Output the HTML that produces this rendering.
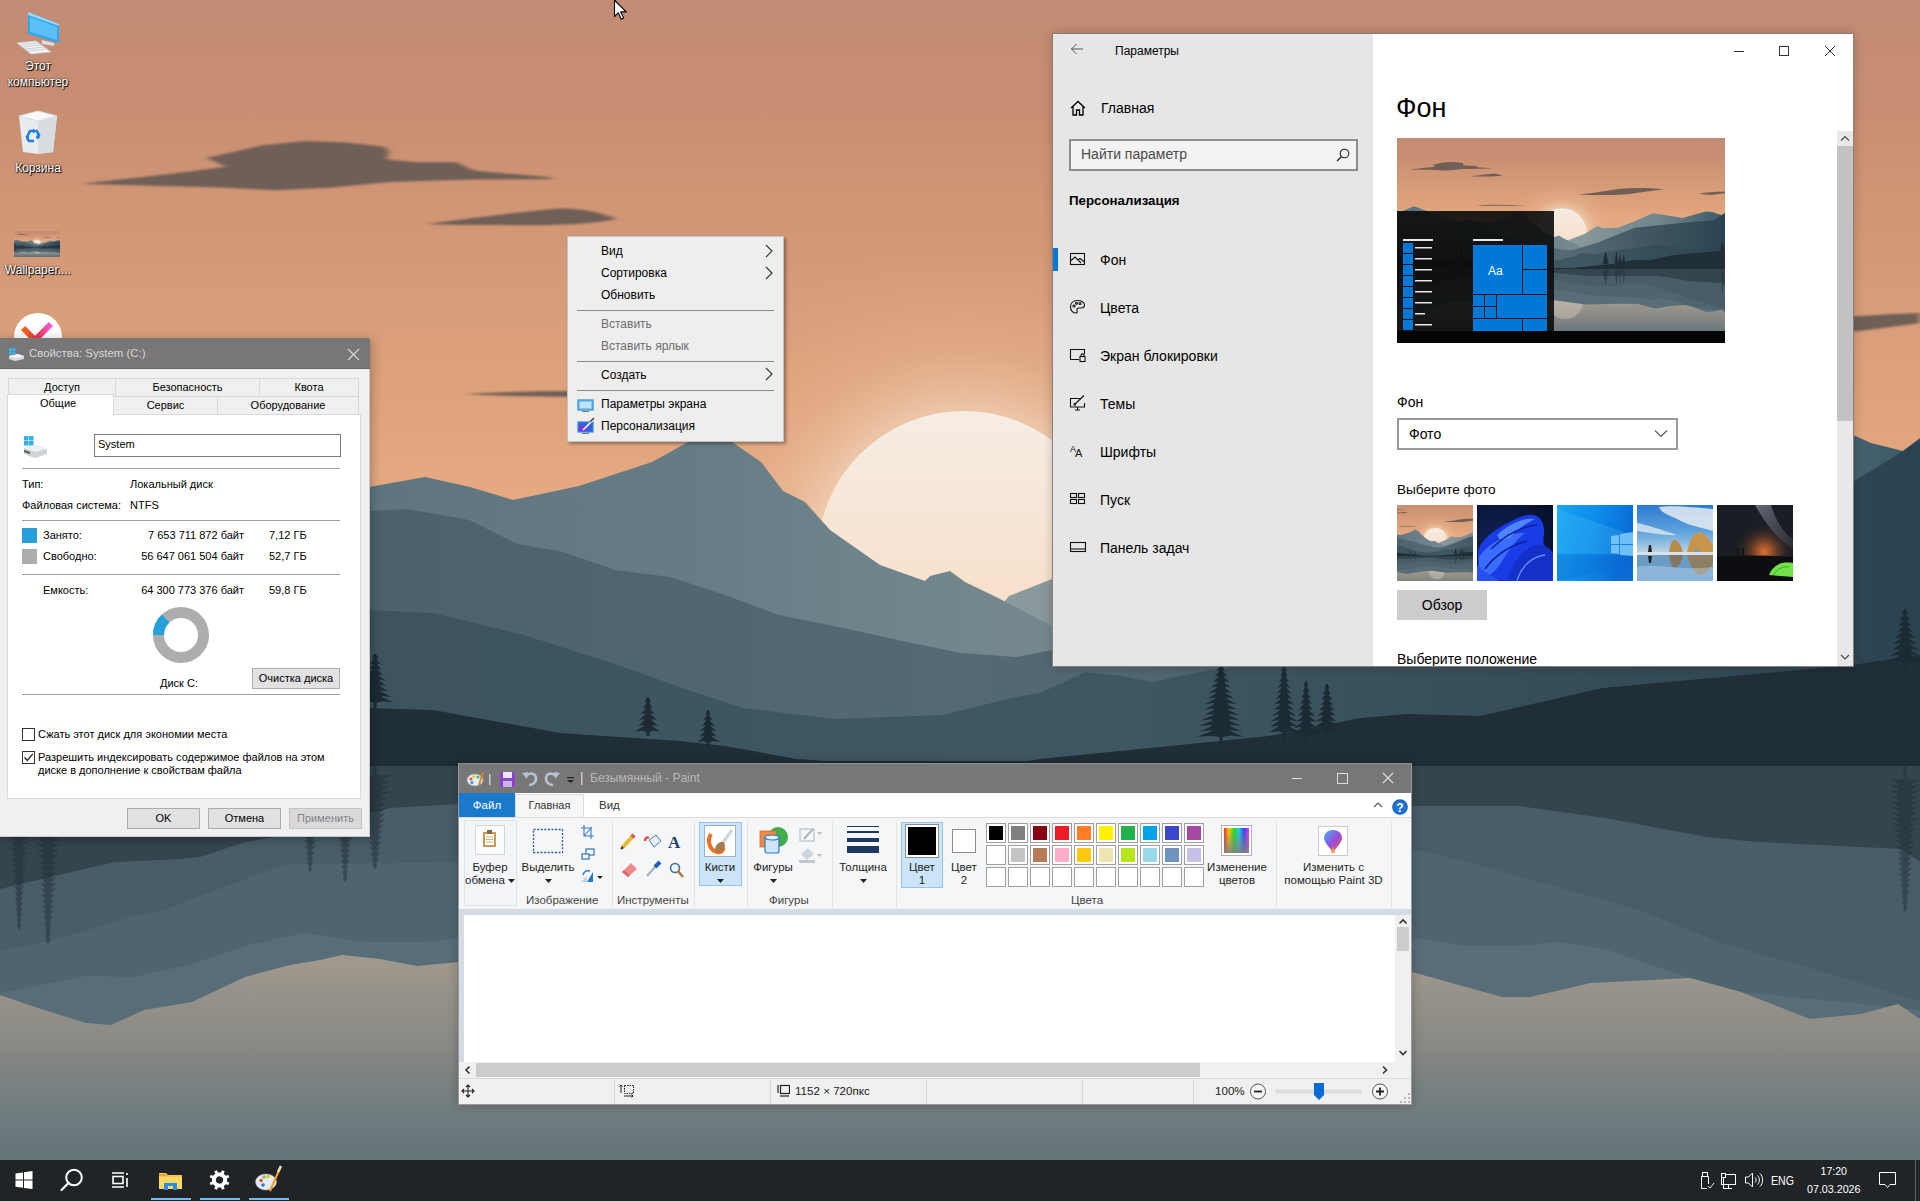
<!DOCTYPE html>
<html><head><meta charset="utf-8"><style>
html,body{margin:0;padding:0;}
body{width:1920px;height:1201px;overflow:hidden;position:relative;font-family:"Liberation Sans",sans-serif;background:#2a3a44;}
.a{position:absolute;}
.t{position:absolute;white-space:nowrap;line-height:1;}
.win{position:absolute;overflow:hidden;}
.sep{position:absolute;height:1px;background:#a0a0a0;}
.btn{position:absolute;background:#e1e1e1;border:1px solid #adadad;box-sizing:border-box;font-size:11px;color:#000;text-align:center;}
.tab{position:absolute;background:#f0f0f0;border:1px solid #d9d9d9;box-sizing:border-box;font-size:11px;text-align:center;color:#000;}
.chk{position:absolute;width:13px;height:13px;border:1px solid #333;box-sizing:border-box;background:#fff;}
.ctx{position:absolute;font-size:12px;color:#000;}
.dim{color:#6d6d6d;}
.nav{position:absolute;font-size:14px;color:#000;}
.pal{position:absolute;width:20px;height:20px;box-sizing:border-box;border:1px solid #a0a0a0;background:#fff;}
.pal i{position:absolute;left:2px;top:2px;width:14px;height:14px;}
.rl{position:absolute;font-size:11.5px;color:#1e1e1e;text-align:center;line-height:13px;}
.gl{position:absolute;font-size:11.5px;color:#444;}
.gsep{position:absolute;width:1px;background:#e2e3e4;top:822px;height:86px;}
.icn{position:absolute;color:#fff;font-size:12px;text-align:center;text-shadow:0 0 2px #000,1px 1px 1px #000;line-height:16px;}

</style></head><body>
<svg class="a" style="left:0;top:0" width="1920" height="1201" viewBox="0 0 1920 1201">
<defs><symbol id="wall" viewBox="0 0 1920 1200" preserveAspectRatio="xMidYMid slice">
<defs>
<linearGradient id="sky" x1="0" y1="0" x2="0" y2="1200" gradientUnits="userSpaceOnUse">
<stop offset="0" stop-color="#c38b74"/>
<stop offset="0.09" stop-color="#c88e73"/>
<stop offset="0.17" stop-color="#d09675"/>
<stop offset="0.26" stop-color="#d89d79"/>
<stop offset="0.34" stop-color="#dfa37c"/>
<stop offset="0.40" stop-color="#e4a981"/>
<stop offset="0.6" stop-color="#e8b089"/>
</linearGradient>
<radialGradient id="glow" cx="964" cy="560" r="320" gradientUnits="userSpaceOnUse">
<stop offset="0.42" stop-color="#f3d9c2" stop-opacity="0.8"/>
<stop offset="0.65" stop-color="#ecc0a0" stop-opacity="0.3"/>
<stop offset="1" stop-color="#e4a981" stop-opacity="0"/>
</radialGradient>
<linearGradient id="sun" x1="0" y1="410" x2="0" y2="705" gradientUnits="userSpaceOnUse">
<stop offset="0" stop-color="#f6ede4"/>
<stop offset="1" stop-color="#f8d9bf"/>
</linearGradient>
<linearGradient id="sand" x1="0" y1="940" x2="0" y2="1200" gradientUnits="userSpaceOnUse">
<stop offset="0" stop-color="#a59c8f"/>
<stop offset="0.42" stop-color="#888884"/>
<stop offset="0.615" stop-color="#747e80"/>
<stop offset="0.846" stop-color="#647479"/>
<stop offset="1" stop-color="#607278"/>
</linearGradient>
<linearGradient id="l0" x1="990" y1="0" x2="1920" y2="0" gradientUnits="userSpaceOnUse">
<stop offset="0" stop-color="#8c9a9c"/>
<stop offset="0.6" stop-color="#6f858c"/>
<stop offset="1" stop-color="#3b5966"/>
</linearGradient>
<linearGradient id="l1" x1="369" y1="0" x2="1000" y2="0" gradientUnits="userSpaceOnUse">
<stop offset="0" stop-color="#5e7580"/>
<stop offset="0.5" stop-color="#667c85"/>
<stop offset="1" stop-color="#74888e"/>
</linearGradient>
<linearGradient id="l2" x1="0" y1="0" x2="1920" y2="0" gradientUnits="userSpaceOnUse">
<stop offset="0.19" stop-color="#4b626c"/>
<stop offset="0.5" stop-color="#536a74"/>
<stop offset="0.6" stop-color="#4f6670"/>
<stop offset="1" stop-color="#2b4250"/>
</linearGradient>
<linearGradient id="l3" x1="0" y1="0" x2="1920" y2="0" gradientUnits="userSpaceOnUse">
<stop offset="0.19" stop-color="#3d5460"/>
<stop offset="0.36" stop-color="#3e5662"/>
<stop offset="0.52" stop-color="#3f5763"/>
<stop offset="0.58" stop-color="#3f5762"/>
<stop offset="1" stop-color="#2e4552"/>
</linearGradient>
<filter id="cb" x="-10%" y="-50%" width="120%" height="200%"><feGaussianBlur stdDeviation="3 1.2"/></filter>
</defs>
<rect x="0" y="0" width="1920" height="770" fill="url(#sky)"/>
<rect x="600" y="200" width="800" height="600" fill="url(#glow)"/>
<path d="M85.6,183.3 L150.3,176.2 L198.1,170.6 L226.2,166.4 L206.5,158 L237.5,150.9 L262.8,145.3 L305,141.1 L347.2,142.5 L383.7,146.7 L389.3,150.9 L386.5,159.4 L417.5,162.2 L456.8,162.2 L473.7,170.6 L552.4,177.6 L552.4,179 L473.7,179.6 L389.3,181.9 L333.1,187.5 L276.9,190.3 L220.6,187.5 L164.4,186.1 L85.6,184.1 Z" fill="#6f5e57" filter="url(#cb)"/>
<path d="M426,224 C460,220 500,214 545,210 C560,207 590,208 617,219 C590,225 540,226 500,225 C470,225 445,225 426,224 Z" fill="#6f5e57" filter="url(#cb)"/>
<path d="M465,394 C500,392 540,391 580,391 C640,391 700,392 757,394 C700,396 640,397 590,397 C540,397 500,396 465,394 Z" fill="#6f5e57" filter="url(#cb)"/>
<path d="M1064,330 C1150,324 1250,304 1330,296 C1400,290 1480,292 1563,300 C1500,308 1420,318 1360,328 C1280,336 1170,336 1064,330 Z" fill="#6f5e57" filter="url(#cb)"/>
<path d="M1772,323 C1810,318 1853,316 1920,313 L1920,323 C1880,328 1853,334 1820,332 C1800,330 1785,327 1772,323 Z" fill="#6f5e57" filter="url(#cb)"/>
<circle cx="964" cy="558" r="147" fill="url(#sun)"/>
<polygon points="990,770 990,620 1009,596 1100,560 1171,515 1207,529 1292,525 1391,487 1497,441 1567,451 1673,469 1744,448 1808,430 1853,435 1871,443 1903,451 1920,438 1920,770" fill="url(#l0)" />
<polygon points="0,770 0,445 50,420 100,400 150,418 250,455 369,487 425,477 470,487 513,500 579,486 652,462 690,441 712,428 735,444 761,462 783,491 805,502 830,530 880,565 925,581 930,576 950,571 965,582 992,595 1002,600 1040,620 1100,650 1100,770" fill="url(#l1)" />
<polygon points="0,770 0,505 100,500 250,505 369,511 407,509 469,520 517,544 560,551 615,570 670,577 725,595 779,615 834,626 907,642 961,653 1016,657 1053,650 1179,610 1391,525 1603,504 1744,490 1853,482 1900,453 1920,439 1920,770" fill="url(#l2)" />
<polygon points="0,770 0,600 200,605 369,610 433,613 524,635 615,664 688,690 743,708 834,719 943,715 1016,697 1040,693 1086,672 1120,676 1152,682 1200,672 1320,653 1532,625 1744,650 1920,690 1920,770" fill="url(#l3)" />
<polygon points="0,770 0,700 200,705 369,708 433,710 560,733 680,741 725,746 797,759 852,763 1016,763 1040,759 1200,743 1269,736 1361,718 1407,714 1480,716 1603,688 1853,665 1920,655 1920,770" fill="#1f2e37" />
<polygon points="375,654 375.9,654.0 379.1,659.1 376.8,658.0 376.7,659.4 380.7,664.5 377.6,663.4 377.4,664.8 381.4,669.9 377.9,668.9 378.2,670.2 383.5,675.3 378.8,674.2 378.9,675.6 385.5,680.7 379.7,679.6 379.7,681.0 386.1,686.1 380.0,685.0 380.4,686.4 388.4,691.5 381.0,690.4 381.2,691.8 391.2,696.9 382.3,695.9 381.9,697.2 393.4,702.3 383.3,701.2 376.5,702.6 376.5,708 373.5,708 373.5,702.6 368.1,701.2 359.7,702.3 368.1,697.2 367.4,695.9 358.2,696.9 368.8,691.8 368.4,690.4 360.4,691.5 369.6,686.4 369.9,685.0 363.6,686.1 370.3,681.0 370.6,679.6 365.1,680.7 371.1,675.6 370.7,674.2 365.5,675.3 371.8,670.2 371.9,668.9 368.1,669.9 372.6,664.8 372.4,663.4 369.2,664.5 373.3,659.4 373.2,658.0 371.1,659.1 374.1,654.0" fill="#1b2a33"/>
<polygon points="648,697 648.6,697.0 651.2,702.6 649.4,701.4 649.4,702.9 652.6,708.4 650.1,707.2 650.2,708.7 655.1,714.3 651.2,713.1 651.0,714.5 657.1,720.1 652.1,718.9 651.8,720.4 658.4,726.0 652.7,724.8 652.6,726.2 659.8,731.8 653.3,730.6 649.5,732.1 649.5,736 646.5,736 646.5,732.1 642.1,730.6 634.9,731.8 643.4,726.2 643.6,724.8 638.2,726.0 644.2,720.4 644.1,718.9 639.3,720.1 645.0,714.5 644.7,713.1 640.7,714.3 645.8,708.7 645.7,707.2 642.8,708.4 646.6,702.9 646.5,701.4 644.6,702.6 647.4,697.0" fill="#1b2a33"/>
<polygon points="708,710 708.6,710.0 711.2,715.1 709.4,714.0 709.3,715.4 712.8,720.5 710.2,719.4 710.0,720.8 714.8,725.9 711.0,724.9 710.8,726.2 716.2,731.3 711.7,730.2 711.5,731.6 716.7,736.7 711.9,735.6 712.2,737.0 720.0,742.1 713.4,741.0 709.5,742.4 709.5,746 706.5,746 706.5,742.4 703.3,741.0 697.6,742.1 703.8,737.0 704.1,735.6 699.4,736.7 704.5,731.6 704.4,730.2 700.0,731.3 705.2,726.2 705.4,724.9 702.2,725.9 706.0,720.8 705.9,719.4 703.4,720.5 706.7,715.4 706.7,714.0 705.2,715.1 707.4,710.0" fill="#1b2a33"/>
<polygon points="1221,666 1222.3,666.0 1225.1,671.2 1222.8,670.1 1223.0,671.5 1227.4,676.7 1223.9,675.6 1223.8,676.9 1229.4,682.1 1224.8,681.0 1224.5,682.4 1230.7,687.6 1225.4,686.5 1225.2,687.9 1231.3,693.1 1225.6,692.0 1226.0,693.3 1234.0,698.5 1226.9,697.4 1226.7,698.8 1236.3,704.0 1227.9,702.9 1227.4,704.3 1237.3,709.5 1228.3,708.4 1228.1,709.8 1238.8,714.9 1229.0,713.9 1228.9,715.2 1240.1,720.4 1229.6,719.3 1229.6,720.7 1241.5,725.9 1230.2,724.8 1230.3,726.2 1241.8,731.4 1230.3,730.3 1231.1,731.6 1243.5,736.8 1231.1,735.7 1222.5,737.1 1222.5,745 1219.5,745 1219.5,737.1 1210.3,735.7 1197.1,736.8 1210.9,731.6 1211.5,730.3 1199.9,731.4 1211.7,726.2 1211.1,724.8 1199.1,725.9 1212.4,720.7 1211.9,719.3 1200.8,720.4 1213.1,715.2 1213.6,713.9 1204.5,714.9 1213.9,709.8 1213.5,708.4 1204.4,709.5 1214.6,704.3 1214.0,702.9 1205.4,704.0 1215.3,698.8 1215.4,697.4 1208.5,698.5 1216.0,693.3 1215.6,692.0 1208.9,693.1 1216.8,687.9 1216.4,686.5 1210.8,687.6 1217.5,682.4 1217.4,681.0 1213.1,682.1 1218.2,676.9 1218.1,675.6 1214.5,676.7 1219.0,671.5 1219.0,670.1 1216.6,671.2 1219.7,666.0" fill="#1b2a33"/>
<polygon points="1284,666 1284.8,666.0 1287.0,671.3 1285.4,670.2 1285.3,671.5 1287.9,676.8 1285.8,675.7 1285.8,677.1 1289.0,682.4 1286.3,681.3 1286.3,682.6 1290.0,687.9 1286.7,686.8 1286.8,688.2 1291.1,693.5 1287.2,692.4 1287.3,693.8 1292.0,699.0 1287.6,697.9 1287.8,699.3 1294.0,704.6 1288.5,703.5 1288.3,704.9 1293.8,710.1 1288.4,709.0 1288.8,710.4 1296.4,715.7 1289.6,714.6 1289.3,716.0 1297.0,721.2 1289.8,720.1 1289.8,721.5 1298.5,726.8 1290.5,725.7 1290.3,727.0 1299.7,732.3 1291.1,731.2 1285.5,732.6 1285.5,740 1282.5,740 1282.5,732.6 1277.4,731.2 1269.4,732.3 1277.7,727.0 1277.7,725.7 1269.9,726.8 1278.2,721.5 1278.1,720.1 1270.9,721.2 1278.7,716.0 1278.7,714.6 1272.3,715.7 1279.2,710.4 1279.2,709.0 1273.4,710.1 1279.7,704.9 1279.4,703.5 1273.8,704.6 1280.2,699.3 1280.1,697.9 1275.3,699.0 1280.7,693.8 1280.8,692.4 1277.0,693.5 1281.2,688.2 1281.0,686.8 1277.2,687.9 1281.7,682.6 1281.7,681.3 1278.9,682.4 1282.2,677.1 1282.2,675.7 1280.1,676.8 1282.7,671.5 1282.6,670.2 1280.9,671.3 1283.2,666.0" fill="#1b2a33"/>
<polygon points="1306,681 1306.6,681.0 1308.7,686.6 1307.2,685.4 1307.2,686.9 1309.9,692.5 1307.7,691.3 1307.7,692.8 1310.8,698.4 1308.1,697.2 1308.2,698.7 1312.0,704.3 1308.7,703.1 1308.8,704.6 1312.8,710.2 1309.1,709.0 1309.3,710.5 1315.3,716.1 1310.2,714.9 1309.8,716.4 1316.5,722.0 1310.7,720.8 1310.3,722.3 1316.5,727.9 1310.7,726.7 1310.9,728.2 1318.5,733.8 1311.6,732.6 1307.5,734.1 1307.5,740 1304.5,740 1304.5,734.1 1300.8,732.6 1294.5,733.8 1301.1,728.2 1300.7,726.7 1294.2,727.9 1301.7,722.3 1301.5,720.8 1296.0,722.0 1302.2,716.4 1302.4,714.9 1297.9,716.1 1302.7,710.5 1302.5,709.0 1298.3,710.2 1303.2,704.6 1303.3,703.1 1299.9,704.3 1303.8,698.7 1303.9,697.2 1301.3,698.4 1304.3,692.8 1304.4,691.3 1302.5,692.5 1304.8,686.9 1304.9,685.4 1303.6,686.6 1305.4,681.0" fill="#1b2a33"/>
<polygon points="1327,684 1327.7,684.0 1329.8,689.1 1328.2,688.0 1328.3,689.4 1330.9,694.5 1328.8,693.4 1328.8,694.8 1332.8,699.9 1329.6,698.9 1329.4,700.2 1333.4,705.3 1329.9,704.2 1330.0,705.6 1334.9,710.7 1330.6,709.6 1330.6,711.0 1335.9,716.1 1331.0,715.0 1331.1,716.4 1336.5,721.5 1331.3,720.4 1331.7,721.8 1339.1,726.9 1332.4,725.9 1332.3,727.2 1340.9,732.3 1333.3,731.2 1328.5,732.6 1328.5,738 1325.5,738 1325.5,732.6 1321.7,731.2 1315.2,732.3 1321.7,727.2 1321.5,725.9 1314.8,726.9 1322.3,721.8 1321.8,720.4 1315.5,721.5 1322.9,716.4 1322.5,715.0 1317.0,716.1 1323.4,711.0 1323.3,709.6 1318.8,710.7 1324.0,705.6 1324.2,704.2 1320.9,705.3 1324.6,700.2 1324.5,698.9 1321.3,699.9 1325.2,694.8 1325.0,693.4 1322.5,694.5 1325.7,689.4 1325.8,688.0 1324.3,689.1 1326.3,684.0" fill="#1b2a33"/>
<polygon points="1905,609 1905.9,609.0 1908.5,614.6 1906.6,613.4 1906.6,614.9 1909.8,620.5 1907.2,619.3 1907.3,620.8 1911.2,626.4 1907.8,625.2 1908.0,626.7 1912.7,632.3 1908.5,631.1 1908.7,632.6 1915.3,638.2 1909.6,637.0 1909.4,638.5 1916.3,644.1 1910.1,642.9 1910.1,644.4 1919.0,650.0 1911.3,648.8 1910.8,650.3 1919.6,655.9 1911.6,654.7 1911.5,656.2 1921.1,661.8 1912.3,660.6 1906.5,662.1 1906.5,668 1903.5,668 1903.5,662.1 1897.4,660.6 1888.1,661.8 1898.5,656.2 1898.2,654.7 1889.9,655.9 1899.2,650.3 1899.4,648.8 1892.6,650.0 1899.9,644.4 1899.7,642.9 1893.3,644.1 1900.6,638.5 1900.5,637.0 1895.0,638.2 1901.3,632.6 1901.5,631.1 1897.3,632.3 1902.0,626.7 1901.9,625.2 1898.1,626.4 1902.7,620.8 1902.6,619.3 1899.6,620.5 1903.4,614.9 1903.4,613.4 1901.5,614.6 1904.1,609.0" fill="#1b2a33"/>
<polygon points="19,590 19.8,590.0 21.3,595.2 20.1,594.1 20.0,595.4 21.8,600.6 20.3,599.5 20.3,600.9 22.4,606.1 20.5,605.0 20.6,606.3 23.1,611.5 20.8,610.4 20.9,611.8 24.2,617.0 21.3,615.9 21.2,617.2 24.7,622.4 21.5,621.3 21.5,622.7 25.2,627.9 21.8,626.8 21.8,628.1 26.1,633.3 22.2,632.2 22.1,633.6 27.1,638.8 22.7,637.7 22.4,639.0 27.8,644.2 23.0,643.1 22.7,644.5 27.7,649.6 22.9,648.6 23.0,649.9 27.6,655.1 22.9,654.0 23.3,655.4 29.0,660.5 23.5,659.5 23.5,660.8 29.1,666.0 23.6,664.9 23.8,666.3 30.1,671.4 24.0,670.3 24.1,671.7 31.3,676.9 24.5,675.8 24.4,677.2 31.1,682.3 24.4,681.2 24.7,682.6 32.9,687.8 25.3,686.7 25.0,688.1 34.2,693.2 25.8,692.1 20.5,693.5 20.5,705 17.5,705 17.5,693.5 12.1,692.1 3.7,693.2 13.0,688.1 12.6,686.7 4.7,687.8 13.3,682.6 13.1,681.2 5.8,682.3 13.6,677.2 13.3,675.8 6.4,676.9 13.9,671.7 13.8,670.3 7.4,671.4 14.2,666.3 14.0,664.9 7.9,666.0 14.5,660.8 14.9,659.5 9.8,660.5 14.7,655.4 15.0,654.0 10.1,655.1 15.0,649.9 14.9,648.6 9.8,649.6 15.3,644.5 15.0,643.1 10.1,644.2 15.6,639.0 15.7,637.7 11.6,638.8 15.9,633.6 16.0,632.2 12.3,633.3 16.2,628.1 16.1,626.8 12.5,627.9 16.5,622.7 16.4,621.3 13.2,622.4 16.8,617.2 16.6,615.9 13.6,617.0 17.1,611.8 17.2,610.4 15.0,611.5 17.4,606.3 17.4,605.0 15.4,606.1 17.7,600.9 17.7,599.5 16.2,600.6 18.0,595.4 17.9,594.1 16.4,595.2 18.2,590.0" fill="#1b2a33"/>
<polygon points="48,575 48.9,575.0 50.7,580.3 49.2,579.2 49.2,580.6 51.8,585.9 49.7,584.8 49.6,586.1 52.5,591.4 50.0,590.3 49.9,591.7 52.5,597.0 50.0,595.9 50.2,597.3 53.2,602.6 50.4,601.5 50.5,602.9 54.3,608.1 50.9,607.0 50.8,608.4 54.7,613.7 51.0,612.6 51.2,614.0 56.2,619.3 51.7,618.2 51.5,619.6 56.8,624.9 51.9,623.8 51.8,625.1 57.9,630.4 52.5,629.3 52.1,630.7 58.0,636.0 52.5,634.9 52.4,636.3 59.5,641.6 53.2,640.5 52.8,641.9 58.7,647.1 52.8,646.0 53.1,647.4 59.1,652.7 53.0,651.6 53.4,653.0 61.4,658.3 54.0,657.2 53.7,658.6 60.9,663.9 53.8,662.8 54.0,664.1 61.1,669.4 53.9,668.3 54.4,669.7 62.2,675.0 54.4,673.9 54.7,675.3 62.8,680.6 54.7,679.5 55.0,680.9 65.2,686.1 55.7,685.0 55.3,686.4 63.5,691.7 55.0,690.6 49.5,692.0 49.5,705 46.5,705 46.5,692.0 40.1,690.6 30.5,691.7 40.7,686.4 40.0,685.0 30.2,686.1 41.0,680.9 40.7,679.5 31.8,680.6 41.3,675.3 41.3,673.9 33.0,675.0 41.6,669.7 41.9,668.3 34.5,669.4 42.0,664.1 42.3,662.8 35.3,663.9 42.3,658.6 42.4,657.2 35.7,658.3 42.6,653.0 43.0,651.6 36.8,652.7 42.9,647.4 42.6,646.0 35.9,647.1 43.2,641.9 43.5,640.5 37.9,641.6 43.6,636.3 43.5,634.9 38.0,636.0 43.9,630.7 43.9,629.3 38.9,630.4 44.2,625.1 44.3,623.8 39.8,624.9 44.5,619.6 44.3,618.2 39.8,619.3 44.8,614.0 45.1,612.6 41.5,613.7 45.2,608.4 45.2,607.0 41.7,608.1 45.5,602.9 45.6,601.5 42.6,602.6 45.8,597.3 46.0,595.9 43.5,597.0 46.1,591.7 46.1,590.3 43.9,591.4 46.4,586.1 46.4,584.8 44.4,585.9 46.8,580.6 46.8,579.2 45.3,580.3 47.1,575.0" fill="#1b2a33"/>
<polygon points="310,650 310.8,650.0 313.0,655.1 311.3,654.0 311.3,655.4 314.1,660.5 311.8,659.4 311.9,660.8 314.8,665.9 312.2,664.9 312.4,666.2 316.3,671.3 312.8,670.2 313.0,671.6 317.8,676.7 313.5,675.6 313.5,677.0 318.3,682.1 313.8,681.0 314.1,682.4 320.6,687.5 314.8,686.4 314.6,687.8 322.5,692.9 315.6,691.9 315.2,693.2 322.7,698.3 315.7,697.2 315.7,698.6 322.7,703.7 315.7,702.6 311.5,704.0 311.5,710 308.5,710 308.5,704.0 303.2,702.6 294.9,703.7 304.3,698.6 304.2,697.2 297.2,698.3 304.8,693.2 305.0,691.9 298.9,692.9 305.4,687.8 305.7,686.4 300.5,687.5 305.9,682.4 305.5,681.0 300.1,682.1 306.5,677.0 306.5,675.6 302.2,676.7 307.0,671.6 307.1,670.2 303.5,671.3 307.6,666.2 307.4,664.9 304.1,665.9 308.1,660.8 308.3,659.4 306.2,660.5 308.7,655.4 308.7,654.0 307.0,655.1 309.2,650.0" fill="#1b2a33"/>
<polygon points="345,640 345.8,640.0 347.8,645.4 346.3,644.3 346.3,645.7 349.1,651.2 346.9,650.0 346.8,651.5 349.7,656.9 347.1,655.8 347.3,657.2 350.6,662.6 347.5,661.5 347.8,662.9 352.0,668.4 348.1,667.2 348.3,668.6 352.6,674.1 348.4,672.9 348.8,674.4 354.4,679.8 349.2,678.7 349.3,680.1 356.4,685.5 350.1,684.4 349.8,685.8 357.6,691.3 350.7,690.1 350.3,691.5 357.3,697.0 350.5,695.8 350.8,697.3 360.0,702.7 351.7,701.6 346.5,703.0 346.5,710 343.5,710 343.5,703.0 339.2,701.6 332.1,702.7 339.2,697.3 339.8,695.8 333.4,697.0 339.7,691.5 339.5,690.1 332.8,691.3 340.2,685.8 340.6,684.4 335.2,685.5 340.7,680.1 340.5,678.7 335.0,679.8 341.2,674.4 341.3,672.9 336.7,674.1 341.7,668.6 341.5,667.2 337.2,668.4 342.2,662.9 342.4,661.5 339.2,662.6 342.7,657.2 342.6,655.8 339.6,656.9 343.2,651.5 343.4,650.0 341.4,651.2 343.7,645.7 343.8,644.3 342.3,645.4 344.2,640.0" fill="#1b2a33"/>
<rect x="0" y="763" width="1920" height="440" fill="#34454d"/>
<rect x="0" y="761" width="1920" height="5" fill="#1f2d35"/>
<polygon points="0,1201 0,889 63,874 115,862 182,859 200,857 245,842 275,837 300,830 390,808 459,804 600,800 800,790 920,787 1108,808 1412,806 1519,806 1605,818 1707,837 1758,842 1902,849 1920,862 1920,1201" fill="#485d67" />
<polygon points="0,1201 0,951 57,939 134,916 163,910 200,896 245,879 290,864 350,864 459,862 700,850 920,830 1072,858 1249,872 1412,849 1468,862 1553,886 1639,910 1724,944 1810,968 1912,999 1920,1000 1920,1201" fill="#4f656e" />
<polygon points="0,1201 0,993 86,976 134,977 192,964 252,944 305,933 365,942 425,942 459,938 700,920 920,886 1108,914 1214,928 1391,930 1412,937 1468,946 1519,946 1557,942 1605,949 1690,978 1741,992 1920,1010 1920,1201" fill="#586d77" />
<g transform="translate(0,1528) scale(1,-1)" opacity="0.5"><polygon points="375,659.5 375.9,659.5 377.6,664.8 376.2,663.6 376.3,665.0 379.0,670.3 376.8,669.2 376.7,670.6 380.1,675.8 377.3,674.7 377.1,676.1 380.2,681.4 377.3,680.2 377.5,681.6 382.1,686.9 378.2,685.8 377.9,687.2 382.2,692.4 378.2,691.3 378.3,692.7 382.8,697.9 378.5,696.8 378.7,698.2 383.9,703.5 379.0,702.4 379.1,703.8 385.1,709.0 379.6,707.9 379.5,709.3 385.0,714.5 379.5,713.4 379.9,714.8 386.5,720.1 380.2,719.0 380.3,720.4 386.9,725.6 380.4,724.5 380.7,725.9 387.9,731.1 380.8,730.0 381.1,731.4 390.6,736.7 382.0,735.6 381.5,737.0 389.1,742.2 381.3,741.1 381.9,742.5 391.1,747.7 382.2,746.6 382.3,748.0 391.4,753.3 382.4,752.2 376.5,753.5 376.5,764 373.5,764 373.5,753.5 367.9,752.2 359.3,753.3 367.7,748.0 368.3,746.6 360.0,747.7 368.1,742.5 367.7,741.1 358.7,742.2 368.5,737.0 369.1,735.6 361.8,736.7 368.9,731.4 369.2,730.0 362.1,731.1 369.3,725.9 369.4,724.5 362.6,725.6 369.7,720.4 369.5,719.0 362.8,720.1 370.1,714.8 370.6,713.4 365.2,714.5 370.5,709.3 370.8,707.9 365.6,709.0 370.9,703.8 371.2,702.4 366.6,703.5 371.3,698.2 371.6,696.8 367.5,697.9 371.7,692.7 371.7,691.3 367.7,692.4 372.1,687.2 372.2,685.8 368.8,686.9 372.5,681.6 372.5,680.2 369.5,681.4 372.9,676.1 372.9,674.7 370.2,675.8 373.3,670.6 373.3,669.2 371.2,670.3 373.7,665.0 373.6,663.6 372.0,664.8 374.1,659.5" fill="#1f2e37"/></g>
<g transform="translate(0,1528) scale(1,-1)" opacity="0.5"><polygon points="648,700.4 648.6,700.4 650.5,705.8 649.1,704.6 649.1,706.1 651.9,711.5 649.7,710.4 649.6,711.8 653.0,717.2 650.2,716.1 650.1,717.5 653.6,723.0 650.5,721.8 650.5,723.3 654.1,728.7 650.8,727.6 651.0,729.0 655.4,734.4 651.3,733.3 651.5,734.7 656.8,740.2 652.0,739.0 652.0,740.4 658.4,745.9 652.7,744.7 652.4,746.2 659.5,751.6 653.2,750.5 652.9,751.9 659.9,757.3 653.4,756.2 649.5,757.6 649.5,764 646.5,764 646.5,757.6 642.2,756.2 635.1,757.3 643.1,751.9 643.5,750.5 638.0,751.6 643.6,746.2 643.5,744.7 638.1,745.9 644.0,740.4 643.7,739.0 638.4,740.2 644.5,734.7 644.4,733.3 639.9,734.4 645.0,729.0 644.9,727.6 641.1,728.7 645.5,723.3 645.6,721.8 642.7,723.0 645.9,717.5 645.8,716.1 643.0,717.2 646.4,711.8 646.3,710.4 644.2,711.5 646.9,706.1 646.8,704.6 645.4,705.8 647.4,700.4" fill="#1f2e37"/></g>
<g transform="translate(0,1528) scale(1,-1)" opacity="0.5"><polygon points="708,712.7 708.6,712.7 710.5,718.2 709.1,717.0 709.1,718.5 711.4,724.0 709.5,722.8 709.7,724.2 713.3,729.7 710.4,728.6 710.2,730.0 714.4,735.5 710.9,734.3 710.8,735.8 715.5,741.3 711.4,740.1 711.3,741.6 717.2,747.0 712.1,745.9 711.9,747.3 718.2,752.8 712.6,751.7 712.4,753.1 718.2,758.6 712.6,757.4 709.5,758.9 709.5,764 706.5,764 706.5,758.9 703.1,757.4 697.1,758.6 703.6,753.1 703.5,751.7 698.1,752.8 704.1,747.3 704.0,745.9 699.2,747.0 704.7,741.6 704.6,740.1 700.5,741.3 705.2,735.8 705.3,734.3 702.1,735.5 705.8,730.0 705.9,728.6 703.4,729.7 706.3,724.2 706.5,722.8 704.6,724.0 706.9,718.5 706.8,717.0 705.4,718.2 707.4,712.7" fill="#1f2e37"/></g>
<g transform="translate(0,1528) scale(1,-1)" opacity="0.5"><polygon points="1221,670.9 1222.3,670.9 1225.0,676.2 1222.8,675.1 1222.9,676.5 1226.4,681.8 1223.4,680.7 1223.6,682.1 1227.5,687.4 1223.9,686.3 1224.2,687.7 1229.1,693.0 1224.6,691.8 1224.8,693.2 1231.2,698.6 1225.6,697.4 1225.5,698.8 1233.3,704.1 1226.6,703.0 1226.1,704.4 1234.8,709.7 1227.2,708.6 1226.7,710.0 1235.9,715.3 1227.7,714.2 1227.4,715.6 1237.1,720.9 1228.3,719.8 1228.0,721.2 1236.3,726.5 1227.9,725.4 1228.6,726.8 1238.4,732.1 1228.8,730.9 1229.3,732.3 1242.3,737.7 1230.6,736.5 1229.9,737.9 1243.9,743.2 1231.3,742.1 1230.5,743.5 1245.8,748.8 1232.2,747.7 1231.2,749.1 1246.8,754.4 1232.6,753.3 1222.5,754.7 1222.5,764 1219.5,764 1219.5,754.7 1209.8,753.3 1196.2,754.4 1210.8,749.1 1211.0,747.7 1198.8,748.8 1211.5,743.5 1211.3,742.1 1199.4,743.2 1212.1,737.9 1212.6,736.5 1202.2,737.7 1212.7,732.3 1213.5,730.9 1204.4,732.1 1213.4,726.8 1213.9,725.4 1205.1,726.5 1214.0,721.2 1214.1,719.8 1205.7,720.9 1214.6,715.6 1214.3,714.2 1206.0,715.3 1215.3,710.0 1214.8,708.6 1207.3,709.7 1215.9,704.4 1215.8,703.0 1209.5,704.1 1216.5,698.8 1216.5,697.4 1211.0,698.6 1217.2,693.2 1217.5,691.8 1213.3,693.0 1217.8,687.7 1217.9,686.3 1214.0,687.4 1218.4,682.1 1218.6,680.7 1215.7,681.8 1219.1,676.5 1219.0,675.1 1216.6,676.2 1219.7,670.9" fill="#1f2e37"/></g>
<g transform="translate(0,1528) scale(1,-1)" opacity="0.5"><polygon points="1284,670.9 1284.8,670.9 1286.8,676.2 1285.3,675.1 1285.2,676.5 1287.3,681.8 1285.5,680.7 1285.6,682.1 1288.3,687.4 1285.9,686.3 1286.0,687.7 1289.7,693.0 1286.6,691.8 1286.4,693.2 1290.6,698.6 1287.0,697.4 1286.8,698.8 1291.7,704.1 1287.5,703.0 1287.2,704.4 1291.6,709.7 1287.4,708.6 1287.6,710.0 1292.2,715.3 1287.7,714.2 1288.0,715.6 1293.3,720.9 1288.2,719.8 1288.4,721.2 1293.6,726.5 1288.3,725.4 1288.8,726.8 1295.6,732.1 1289.2,730.9 1289.2,732.3 1297.2,737.7 1289.9,736.5 1289.6,737.9 1297.7,743.2 1290.2,742.1 1290.0,743.5 1297.2,748.8 1290.0,747.7 1290.4,749.1 1297.8,754.4 1290.2,753.3 1285.5,754.7 1285.5,764 1282.5,764 1282.5,754.7 1277.1,753.3 1268.6,754.4 1277.6,749.1 1277.6,747.7 1269.8,748.8 1278.0,743.5 1277.9,742.1 1270.5,743.2 1278.4,737.9 1278.1,736.5 1270.8,737.7 1278.8,732.3 1278.5,730.9 1271.8,732.1 1279.2,726.8 1279.1,725.4 1273.1,726.5 1279.6,721.2 1279.2,719.8 1273.4,720.9 1280.0,715.6 1280.3,714.2 1275.7,715.3 1280.4,710.0 1280.1,708.6 1275.4,709.7 1280.8,704.4 1281.0,703.0 1277.4,704.1 1281.2,698.8 1281.4,697.4 1278.2,698.6 1281.6,693.2 1281.7,691.8 1278.9,693.0 1282.0,687.7 1282.0,686.3 1279.5,687.4 1282.4,682.1 1282.4,680.7 1280.4,681.8 1282.8,676.5 1282.7,675.1 1281.1,676.2 1283.2,670.9" fill="#1f2e37"/></g>
<g transform="translate(0,1528) scale(1,-1)" opacity="0.5"><polygon points="1306,685.1 1306.6,685.1 1308.3,690.3 1307.0,689.2 1307.0,690.6 1308.9,695.8 1307.3,694.7 1307.4,696.1 1310.1,701.3 1307.8,700.2 1307.7,701.5 1310.6,706.7 1308.1,705.6 1308.1,707.0 1311.6,712.2 1308.5,711.1 1308.5,712.4 1312.3,717.6 1308.9,716.5 1308.8,717.9 1313.1,723.1 1309.2,722.0 1309.2,723.4 1314.0,728.5 1309.6,727.5 1309.6,728.8 1314.6,734.0 1309.9,732.9 1309.9,734.3 1314.7,739.5 1309.9,738.4 1310.3,739.7 1315.9,744.9 1310.5,743.8 1310.7,745.2 1316.9,750.4 1310.9,749.3 1311.0,750.7 1318.8,755.8 1311.8,754.8 1307.5,756.1 1307.5,764 1304.5,764 1304.5,756.1 1300.7,754.8 1294.2,755.8 1301.0,750.7 1301.2,749.3 1295.3,750.4 1301.3,745.2 1300.9,743.8 1294.6,744.9 1301.7,739.7 1301.8,738.4 1296.7,739.5 1302.1,734.3 1302.0,732.9 1297.0,734.0 1302.4,728.8 1302.8,727.5 1298.8,728.5 1302.8,723.4 1303.0,722.0 1299.4,723.1 1303.2,717.9 1303.3,716.5 1300.0,717.6 1303.5,712.4 1303.3,711.1 1300.1,712.2 1303.9,707.0 1304.0,705.6 1301.6,706.7 1304.3,701.5 1304.3,700.2 1302.1,701.3 1304.6,696.1 1304.5,694.7 1302.8,695.8 1305.0,690.6 1305.0,689.2 1303.8,690.3 1305.4,685.1" fill="#1f2e37"/></g>
<g transform="translate(0,1528) scale(1,-1)" opacity="0.5"><polygon points="1327,688.0 1327.7,688.0 1329.3,693.4 1328.0,692.3 1328.1,693.7 1330.3,699.1 1328.5,698.0 1328.6,699.4 1331.5,704.8 1329.0,703.7 1329.0,705.1 1332.2,710.5 1329.3,709.4 1329.4,710.8 1333.2,716.2 1329.8,715.1 1329.8,716.5 1334.9,721.9 1330.6,720.8 1330.3,722.2 1335.4,727.6 1330.8,726.5 1330.7,727.9 1336.2,733.3 1331.1,732.2 1331.1,733.6 1336.3,739.0 1331.2,737.9 1331.6,739.3 1338.8,744.7 1332.3,743.6 1332.0,745.0 1339.3,750.4 1332.5,749.3 1332.4,750.7 1340.5,756.1 1333.1,755.0 1328.5,756.4 1328.5,764 1325.5,764 1325.5,756.4 1321.6,755.0 1315.1,756.1 1321.6,750.7 1322.1,749.3 1316.1,750.4 1322.0,745.0 1322.5,743.6 1316.9,744.7 1322.4,739.3 1322.4,737.9 1316.7,739.0 1322.9,733.6 1323.2,732.2 1318.6,733.3 1323.3,727.9 1323.3,726.5 1318.7,727.6 1323.7,722.2 1323.6,720.8 1319.4,721.9 1324.2,716.5 1324.3,715.1 1321.0,716.2 1324.6,710.8 1324.7,709.4 1321.9,710.5 1325.0,705.1 1324.9,703.7 1322.3,704.8 1325.4,699.4 1325.5,698.0 1323.6,699.1 1325.9,693.7 1325.8,692.3 1324.3,693.4 1326.3,688.0" fill="#1f2e37"/></g>
<g transform="translate(0,1528) scale(1,-1)" opacity="0.5"><polygon points="1905,616.8 1905.9,616.8 1907.3,622.0 1906.0,620.9 1906.1,622.3 1908.3,627.5 1906.5,626.4 1906.4,627.8 1908.5,633.0 1906.6,631.9 1906.7,633.3 1909.4,638.6 1907.0,637.5 1906.9,638.8 1910.3,644.1 1907.4,643.0 1907.2,644.4 1910.0,649.6 1907.2,648.5 1907.4,649.9 1911.5,655.1 1907.9,654.0 1907.7,655.4 1912.2,660.6 1908.2,659.5 1908.0,660.9 1911.5,666.2 1907.9,665.1 1908.2,666.4 1912.3,671.7 1908.3,670.6 1908.5,672.0 1913.8,677.2 1909.0,676.1 1908.8,677.5 1914.7,682.7 1909.4,681.6 1909.0,683.0 1914.8,688.3 1909.4,687.2 1909.3,688.5 1914.2,693.8 1909.1,692.7 1909.6,694.1 1915.4,699.3 1909.7,698.2 1909.8,699.6 1915.5,704.8 1909.7,703.7 1910.1,705.1 1917.9,710.3 1910.8,709.2 1910.4,710.6 1916.9,715.9 1910.4,714.8 1910.6,716.1 1917.3,721.4 1910.5,720.3 1910.9,721.7 1919.9,726.9 1911.7,725.8 1911.1,727.2 1919.7,732.4 1911.6,731.3 1911.4,732.7 1919.8,738.0 1911.7,736.9 1911.7,738.2 1919.3,743.5 1911.4,742.4 1911.9,743.8 1921.2,749.0 1912.3,747.9 1906.5,749.3 1906.5,764 1903.5,764 1903.5,749.3 1898.5,747.9 1890.6,749.0 1898.1,743.8 1898.3,742.4 1890.0,743.5 1898.3,738.2 1898.9,736.9 1891.4,738.0 1898.6,732.7 1899.0,731.3 1891.6,732.4 1898.9,727.2 1898.3,725.8 1890.0,726.9 1899.1,721.7 1899.5,720.3 1892.7,721.4 1899.4,716.1 1899.0,714.8 1891.6,715.9 1899.6,710.6 1899.2,709.2 1892.1,710.3 1899.9,705.1 1899.5,703.7 1892.7,704.8 1900.2,699.6 1900.0,698.2 1893.9,699.3 1900.4,694.1 1900.3,692.7 1894.6,693.8 1900.7,688.5 1900.5,687.2 1895.0,688.3 1901.0,683.0 1900.7,681.6 1895.5,682.7 1901.2,677.5 1901.5,676.1 1897.2,677.2 1901.5,672.0 1901.6,670.6 1897.4,671.7 1901.8,666.4 1901.9,665.1 1898.0,666.2 1902.0,660.9 1901.8,659.5 1898.0,660.6 1902.3,655.4 1902.1,654.0 1898.5,655.1 1902.6,649.9 1902.8,648.5 1900.1,649.6 1902.8,644.4 1902.6,643.0 1899.7,644.1 1903.1,638.8 1903.1,637.5 1900.9,638.6 1903.3,633.3 1903.4,631.9 1901.5,633.0 1903.6,627.8 1903.5,626.4 1901.6,627.5 1903.9,622.3 1903.9,620.9 1902.7,622.0 1904.1,616.8" fill="#1f2e37"/></g>
<g transform="translate(0,1528) scale(1,-1)" opacity="0.5"><polygon points="19,598.7 19.8,598.7 21.2,603.9 20.0,602.8 20.0,604.2 21.7,609.4 20.2,608.3 20.2,609.7 22.3,615.0 20.5,613.9 20.4,615.2 22.8,620.5 20.7,619.4 20.6,620.7 23.4,626.0 21.0,624.9 20.8,626.2 23.0,631.5 20.8,630.4 21.0,631.8 23.8,637.0 21.2,635.9 21.2,637.3 24.5,642.5 21.5,641.4 21.4,642.8 24.8,648.0 21.6,646.9 21.6,648.3 25.3,653.5 21.9,652.4 21.8,653.8 25.7,659.0 22.0,657.9 22.0,659.3 26.2,664.5 22.3,663.4 22.2,664.8 26.3,670.1 22.3,669.0 22.4,670.3 27.7,675.6 22.9,674.5 22.6,675.8 27.8,681.1 22.9,680.0 22.8,681.4 27.8,686.6 23.0,685.5 23.0,686.9 29.2,692.1 23.6,691.0 23.2,692.4 29.5,697.6 23.7,696.5 23.5,697.9 30.1,703.1 24.0,702.0 23.7,703.4 29.3,708.6 23.6,707.5 23.9,708.9 29.9,714.1 23.9,713.0 24.1,714.4 31.6,719.6 24.7,718.5 24.3,719.9 31.9,725.2 24.8,724.1 24.5,725.4 31.4,730.7 24.6,729.6 24.7,730.9 32.9,736.2 25.2,735.1 24.9,736.5 32.7,741.7 25.2,740.6 25.1,742.0 34.0,747.2 25.8,746.1 20.5,747.5 20.5,764 17.5,764 17.5,747.5 12.3,746.1 4.1,747.2 12.9,742.0 12.7,740.6 5.0,741.7 13.1,736.5 13.5,735.1 6.8,736.2 13.3,730.9 12.8,729.6 5.2,730.7 13.5,725.4 13.3,724.1 6.2,725.2 13.7,719.9 13.5,718.5 6.9,719.6 13.9,714.4 14.3,713.0 8.5,714.1 14.1,708.9 14.2,707.5 8.2,708.6 14.3,703.4 14.4,702.0 8.7,703.1 14.5,697.9 14.3,696.5 8.6,697.6 14.8,692.4 14.7,691.0 9.4,692.1 15.0,686.9 15.1,685.5 10.4,686.6 15.2,681.4 14.8,680.0 9.7,681.1 15.4,675.8 15.5,674.5 11.2,675.6 15.6,670.3 15.4,669.0 11.0,670.1 15.8,664.8 15.7,663.4 11.6,664.5 16.0,659.3 15.9,657.9 12.1,659.0 16.2,653.8 16.3,652.4 13.0,653.5 16.4,648.3 16.6,646.9 13.7,648.0 16.6,642.8 16.6,641.4 13.7,642.5 16.8,637.3 16.9,635.9 14.4,637.0 17.0,631.8 17.2,630.4 14.9,631.5 17.2,626.2 17.3,624.9 15.2,626.0 17.4,620.7 17.6,619.4 15.8,620.5 17.6,615.2 17.6,613.9 16.0,615.0 17.8,609.7 17.9,608.3 16.5,609.4 18.0,604.2 18.1,602.8 16.9,603.9 18.2,598.7" fill="#1f2e37"/></g>
<g transform="translate(0,1528) scale(1,-1)" opacity="0.5"><polygon points="48,584.5 48.9,584.5 50.6,589.7 49.2,588.6 49.2,590.0 51.0,595.3 49.4,594.2 49.4,595.6 51.3,600.9 49.5,599.8 49.6,601.2 51.8,606.5 49.7,605.3 49.8,606.7 52.7,612.0 50.1,610.9 50.1,612.3 53.2,617.6 50.3,616.5 50.3,617.9 53.4,623.2 50.4,622.1 50.5,623.5 54.2,628.7 50.8,627.6 50.8,629.0 54.1,634.3 50.8,633.2 51.0,634.6 55.8,639.9 51.5,638.8 51.2,640.2 56.3,645.5 51.7,644.4 51.5,645.7 56.3,651.0 51.7,649.9 51.7,651.3 56.3,656.6 51.7,655.5 51.9,656.9 56.7,662.2 51.9,661.1 52.2,662.5 57.6,667.8 52.3,666.6 52.4,668.0 57.6,673.3 52.3,672.2 52.6,673.6 58.4,678.9 52.7,677.8 52.9,679.2 59.6,684.5 53.2,683.4 53.1,684.8 60.5,690.0 53.6,688.9 53.3,690.3 59.6,695.6 53.2,694.5 53.6,695.9 60.3,701.2 53.5,700.1 53.8,701.5 61.0,706.8 53.8,705.6 54.0,707.0 60.7,712.3 53.7,711.2 54.3,712.6 61.3,717.9 54.0,716.8 54.5,718.2 63.1,723.5 54.8,722.4 54.7,723.8 63.7,729.0 55.1,727.9 55.0,729.3 64.6,734.6 55.5,733.5 55.2,734.9 63.3,740.2 54.9,739.1 55.4,740.5 64.5,745.8 55.4,744.7 49.5,746.0 49.5,764 46.5,764 46.5,746.0 40.6,744.7 31.6,745.8 40.6,740.5 40.0,739.1 30.2,740.2 40.8,734.9 41.3,733.5 33.0,734.6 41.0,729.3 41.7,727.9 34.0,729.0 41.3,723.8 41.2,722.4 32.8,723.5 41.5,718.2 41.2,716.8 32.9,717.9 41.7,712.6 42.0,711.2 34.6,712.3 42.0,707.0 41.6,705.6 33.8,706.8 42.2,701.5 42.1,700.1 34.8,701.2 42.4,695.9 41.9,694.5 34.5,695.6 42.7,690.3 43.2,688.9 37.3,690.0 42.9,684.8 42.6,683.4 36.0,684.5 43.1,679.2 43.3,677.8 37.7,678.9 43.4,673.6 43.8,672.2 38.6,673.3 43.6,668.0 43.5,666.6 38.0,667.8 43.8,662.5 44.1,661.1 39.4,662.2 44.1,656.9 44.4,655.5 40.1,656.6 44.3,651.3 44.5,649.9 40.3,651.0 44.5,645.7 44.7,644.4 40.7,645.5 44.8,640.2 44.8,638.8 40.9,639.9 45.0,634.6 45.2,633.2 41.7,634.3 45.2,629.0 45.1,627.6 41.6,628.7 45.5,623.5 45.4,622.1 42.3,623.2 45.7,617.9 45.8,616.5 43.2,617.6 45.9,612.3 46.0,610.9 43.5,612.0 46.2,606.7 46.2,605.3 43.9,606.5 46.4,601.2 46.5,599.8 44.6,600.9 46.6,595.6 46.6,594.2 44.9,595.3 46.8,590.0 46.9,588.6 45.5,589.7 47.1,584.5" fill="#1f2e37"/></g>
<g transform="translate(0,1528) scale(1,-1)" opacity="0.5"><polygon points="310,655.7 310.8,655.7 312.2,660.8 311.0,659.8 311.1,661.1 313.0,666.3 311.3,665.2 311.4,666.5 313.5,671.7 311.6,670.6 311.7,671.9 314.8,677.1 312.2,676.0 312.0,677.4 315.3,682.5 312.4,681.4 312.3,682.8 315.9,687.9 312.7,686.8 312.6,688.2 317.0,693.3 313.2,692.3 312.9,693.6 317.0,698.7 313.1,697.7 313.2,699.0 317.9,704.2 313.6,703.1 313.5,704.4 317.9,709.6 313.6,708.5 313.8,709.9 318.4,715.0 313.8,713.9 314.1,715.3 320.6,720.4 314.7,719.3 314.5,720.7 320.5,725.8 314.7,724.7 314.8,726.1 320.6,731.2 314.8,730.2 315.1,731.5 321.0,736.7 314.9,735.6 315.4,736.9 323.8,742.1 316.2,741.0 315.7,742.3 322.8,747.5 315.7,746.4 316.0,747.8 325.3,752.9 316.9,751.8 311.5,753.2 311.5,764 308.5,764 308.5,753.2 303.7,751.8 295.9,752.9 304.0,747.8 304.4,746.4 297.5,747.5 304.3,742.3 304.3,741.0 297.3,742.1 304.6,736.9 304.7,735.6 298.2,736.7 304.9,731.5 304.9,730.2 298.6,731.2 305.2,726.1 305.4,724.7 299.8,725.8 305.5,720.7 305.4,719.3 299.7,720.4 305.9,715.3 305.6,713.9 300.2,715.0 306.2,709.9 306.5,708.5 302.2,709.6 306.5,704.4 306.8,703.1 302.8,704.2 306.8,699.0 306.5,697.7 302.3,698.7 307.1,693.6 307.2,692.3 303.7,693.3 307.4,688.2 307.6,686.8 304.7,687.9 307.7,682.8 307.6,681.4 304.7,682.5 308.0,677.4 308.1,676.0 305.7,677.1 308.3,671.9 308.4,670.6 306.5,671.7 308.6,666.5 308.6,665.2 306.9,666.3 308.9,661.1 309.0,659.8 307.8,660.8 309.2,655.7" fill="#1f2e37"/></g>
<g transform="translate(0,1528) scale(1,-1)" opacity="0.5"><polygon points="345,646.2 345.8,646.2 347.2,651.5 346.0,650.4 346.0,651.8 348.0,657.1 346.4,656.0 346.3,657.4 348.7,662.7 346.7,661.5 346.6,662.9 349.5,668.2 347.0,667.1 346.9,668.5 349.8,673.8 347.1,672.7 347.2,674.1 350.4,679.4 347.4,678.3 347.5,679.7 350.6,685.0 347.5,683.9 347.8,685.3 352.3,690.6 348.3,689.4 348.1,690.8 352.4,696.1 348.4,695.0 348.4,696.4 353.2,701.7 348.7,700.6 348.7,702.0 353.5,707.3 348.8,706.2 349.0,707.6 353.7,712.9 348.9,711.8 349.3,713.2 354.5,718.5 349.3,717.3 349.5,718.7 355.0,724.0 349.5,722.9 349.8,724.3 356.9,729.6 350.4,728.5 350.1,729.9 357.3,735.2 350.5,734.1 350.4,735.5 358.1,740.8 350.9,739.7 350.7,741.1 357.5,746.4 350.6,745.2 351.0,746.6 358.5,751.9 351.1,750.8 346.5,752.2 346.5,764 343.5,764 343.5,752.2 338.7,750.8 331.0,751.9 339.0,746.6 339.1,745.2 331.8,746.4 339.3,741.1 339.3,739.7 332.4,740.8 339.6,735.5 339.1,734.1 331.9,735.2 339.9,729.9 339.6,728.5 333.0,729.6 340.2,724.3 340.1,722.9 334.0,724.0 340.5,718.7 340.2,717.3 334.3,718.5 340.7,713.2 341.1,711.8 336.2,712.9 341.0,707.6 341.4,706.2 337.0,707.3 341.3,702.0 341.6,700.6 337.5,701.7 341.6,696.4 341.9,695.0 338.1,696.1 341.9,690.8 341.8,689.4 337.9,690.6 342.2,685.3 342.5,683.9 339.4,685.0 342.5,679.7 342.7,678.3 339.8,679.4 342.8,674.1 342.9,672.7 340.4,673.8 343.1,668.5 343.0,667.1 340.6,668.2 343.4,662.9 343.3,661.5 341.1,662.7 343.7,657.4 343.6,656.0 341.9,657.1 344.0,651.8 344.0,650.4 342.7,651.5 344.2,646.2" fill="#1f2e37"/></g>
<polygon points="0,1201 0,995 38,1008 86,1023 111,1025 144,1010 192,1002 245,977 290,965 320,960 342,955 380,959 417,966 459,962 600,990 800,960 920,950 1100,975 1300,970 1412,972 1502,997 1530,997 1591,983 1690,978 1741,992 1810,1019 1861,1014 1898,1004 1920,1019 1920,1201" fill="url(#sand)" />
<clipPath id="sandclip"><polygon points="0,1201 0,995 38,1008 86,1023 111,1025 144,1010 192,1002 245,977 290,965 320,960 342,955 380,959 417,966 459,962 600,990 800,960 920,950 1100,975 1300,970 1412,972 1502,997 1530,997 1591,983 1690,978 1741,992 1810,1019 1861,1014 1898,1004 1920,1019 1920,1201"/></clipPath>
<circle cx="985" cy="955" r="105" fill="#e9dccd" fill-opacity="0.35" clip-path="url(#sandclip)"/>

</symbol></defs>
<use href="#wall" x="0" y="0" width="1920" height="1200"/>
</svg>
<!-- desktop icons -->
<svg class="a" style="left:14px;top:10px" width="48" height="46" viewBox="0 0 48 46">
 <polygon points="14,2 45,14 45,33 14,24" fill="#2fa6ef"/>
 <polygon points="14,2 45,14 45,16 14,5" fill="#9bd6fa"/>
 <polygon points="16,7 43,17 43,30 16,22" fill="#5cc0f7"/>
 <polygon points="28,30 40,33 40,36 28,34" fill="#d8dde2"/>
 <polygon points="3,33 22,31 37,42 17,44" fill="#f1f3f5" stroke="#c8ced4" stroke-width="0.8"/>
 <path d="M6,35 L24,33 M8,37 L27,35 M11,39 L30,37 M13,41 L33,39" stroke="#b9c0c7" stroke-width="0.7"/>
</svg>
<div class="icn" style="left:0;top:58px;width:76px;">Этот<br>компьютер</div>
<svg class="a" style="left:17px;top:110px" width="42" height="45" viewBox="0 0 42 45">
 <polygon points="2,6 21,1 40,6 36,42 21,44 6,42" fill="#e9ecef"/>
 <polygon points="2,6 21,1 40,6 21,11" fill="#f7f8f9" stroke="#d5d9dd" stroke-width="0.8"/>
 <polygon points="21,11 40,6 36,42 21,44" fill="#d9dde1"/>
 <g fill="none" stroke="#1f7fe0" stroke-width="2.6">
  <path d="M10,27 L13,21 L17,21"/><path d="M19,20 L22,25 L20,28"/><path d="M17,31 L12,31 L10,28"/>
 </g>
 <g fill="#1f7fe0"><polygon points="16,18.5 19.5,21 16,23.5"/><polygon points="23.5,27 20,29.5 19,25.5"/><polygon points="10,30 8.5,26 12.5,26.5"/></g>
</svg>
<div class="icn" style="left:0;top:160px;width:76px;">Корзина</div>
<svg class="a" style="left:14px;top:231px" width="46" height="26" viewBox="0 0 1920 1200" preserveAspectRatio="none"><use href="#wall"/></svg>
<div class="icn" style="left:0;top:262px;width:76px;">Wallpaper....</div>
<svg class="a" style="left:13px;top:312px" width="50" height="30" viewBox="0 0 50 30">
 <circle cx="25" cy="25" r="24" fill="#fff"/>
 <path d="M10,16 L22,28 L38,12" stroke="url(#chkg)" stroke-width="6" fill="none"/>
 <defs><linearGradient id="chkg" x1="0" x2="1"><stop offset="0" stop-color="#f26a1b"/><stop offset="0.5" stop-color="#f0334f"/><stop offset="1" stop-color="#f45fd6"/></linearGradient></defs>
</svg>
<!-- PROPERTIES WINDOW -->
<div class="win" style="left:-1px;top:338px;width:371px;height:499px;background:#f0f0f0;border:1px solid #c8c8c8;border-top-color:#777;box-sizing:border-box;box-shadow:1px 2px 10px rgba(0,0,0,0.3);overflow:visible;">
 <div class="a" style="left:0;top:0;width:370px;height:30px;background:#777;border-bottom:1px solid #676767;box-sizing:border-box;"></div>
 <svg class="a" style="left:8px;top:347px;top:9px" width="17" height="13" viewBox="0 0 17 13">
  <rect x="1" y="0" width="3" height="3" fill="#39b2ea"/><rect x="4.5" y="0" width="3" height="3" fill="#39b2ea"/><rect x="1" y="3.5" width="3" height="3" fill="#39b2ea"/><rect x="4.5" y="3.5" width="3" height="3" fill="#39b2ea"/>
  <polygon points="1,8 10,6 16,8 16,11 7,13 1,11" fill="#d7dbdf"/><polygon points="1,8 7,10 16,8 10,6" fill="#f2f3f4"/>
 </svg>
 <div class="t" style="left:29px;top:9px;font-size:11.4px;color:#d8d8d8;">Свойства: System (C:)</div>
 <svg class="a" style="left:347px;top:9px" width="13" height="13" viewBox="0 0 13 13"><path d="M1,1 L12,12 M12,1 L1,12" stroke="#d9d9d9" stroke-width="1.1"/></svg>
 <!-- tabs row1 -->
 <div class="tab" style="left:8px;top:39px;width:108px;height:19px;line-height:17px;">Доступ</div>
 <div class="tab" style="left:115px;top:39px;width:145px;height:19px;line-height:17px;">Безопасность</div>
 <div class="tab" style="left:259px;top:39px;width:100px;height:19px;line-height:17px;">Квота</div>
 <div class="tab" style="left:113px;top:57px;width:105px;height:19px;line-height:17px;">Сервис</div>
 <div class="tab" style="left:217px;top:57px;width:142px;height:19px;line-height:17px;">Оборудование</div>
 <!-- panel -->
 <div class="a" style="left:7px;top:75px;width:354px;height:385px;background:#fff;border:1px solid #d9d9d9;box-sizing:border-box;"></div>
 <div class="a" style="left:7px;top:55px;width:107px;height:22px;background:#fff;border:1px solid #d9d9d9;border-bottom:none;box-sizing:border-box;"></div>
 <div class="t" style="left:40px;top:59px;font-size:11px;">Общие</div>
 <!-- drive icon -->
 <svg class="a" style="left:22px;top:96px" width="26" height="24" viewBox="0 0 26 24">
  <rect x="2" y="1" width="4.5" height="4.5" fill="#35b0ea"/><rect x="7" y="1" width="4.5" height="4.5" fill="#35b0ea"/><rect x="2" y="6" width="4.5" height="4.5" fill="#35b0ea"/><rect x="7" y="6" width="4.5" height="4.5" fill="#35b0ea"/>
  <polygon points="2,13 14,10 25,14 25,19 13,23 2,19" fill="#cfd3d7"/>
  <polygon points="2,13 13,17 25,14 14,10" fill="#eef0f2"/>
  <polygon points="2,15 8,17 8,19 2,17" fill="#555"/>
 </svg>
 <div class="a" style="left:94px;top:95px;width:247px;height:23px;border:1px solid #7a7a7a;box-sizing:border-box;background:#fff;"></div>
 <div class="t" style="left:98px;top:100px;font-size:11px;">System</div>
 <div class="sep" style="left:22px;top:129px;width:318px;"></div>
 <div class="t" style="left:22px;top:140px;font-size:11px;">Тип:</div>
 <div class="t" style="left:130px;top:140px;font-size:11px;">Локальный диск</div>
 <div class="t" style="left:22px;top:161px;font-size:11px;">Файловая система:</div>
 <div class="t" style="left:130px;top:161px;font-size:11px;">NTFS</div>
 <div class="sep" style="left:22px;top:181px;width:318px;"></div>
 <div class="a" style="left:22px;top:189px;width:15px;height:15px;background:#26a0da;"></div>
 <div class="t" style="left:43px;top:191px;font-size:11px;">Занято:</div>
 <div class="t" style="left:100px;width:144px;text-align:right;top:191px;font-size:11px;">7 653 711 872 байт</div>
 <div class="t" style="left:269px;top:191px;font-size:11px;">7,12 ГБ</div>
 <div class="a" style="left:22px;top:210px;width:15px;height:15px;background:#adadad;"></div>
 <div class="t" style="left:43px;top:212px;font-size:11px;">Свободно:</div>
 <div class="t" style="left:100px;width:144px;text-align:right;top:212px;font-size:11px;">56 647 061 504 байт</div>
 <div class="t" style="left:269px;top:212px;font-size:11px;">52,7 ГБ</div>
 <div class="sep" style="left:22px;top:235px;width:318px;"></div>
 <div class="t" style="left:43px;top:246px;font-size:11px;">Емкость:</div>
 <div class="t" style="left:100px;width:144px;text-align:right;top:246px;font-size:11px;">64 300 773 376 байт</div>
 <div class="t" style="left:269px;top:246px;font-size:11px;">59,8 ГБ</div>
 <svg class="a" style="left:151px;top:266px" width="60" height="60" viewBox="0 0 60 60">
  <circle cx="30" cy="30" r="22.5" fill="none" stroke="#adadad" stroke-width="11"/>
  <path d="M7.5,30 A22.5,22.5 0 0 1 14.6,13.6" fill="none" stroke="#26a0da" stroke-width="11"/>
 </svg>
 <div class="t" style="left:160px;top:339px;font-size:11px;">Диск C:</div>
 <div class="btn" style="left:252px;top:329px;width:88px;height:21px;line-height:19px;">Очистка диска</div>
 <div class="sep" style="left:22px;top:355px;width:318px;"></div>
 <div class="chk" style="left:22px;top:389px;"></div>
 <div class="t" style="left:38px;top:390px;font-size:11px;">Сжать этот диск для экономии места</div>
 <div class="chk" style="left:22px;top:412px;"></div>
 <svg class="a" style="left:23px;top:413px" width="11" height="11" viewBox="0 0 11 11"><path d="M1.5,5.5 L4.3,8.5 L9.8,1.8" stroke="#222" stroke-width="1.3" fill="none"/></svg>
 <div class="t" style="left:38px;top:412px;font-size:11px;line-height:13px;">Разрешить индексировать содержимое файлов на этом<br>диске в дополнение к свойствам файла</div>
 <div class="btn" style="left:127px;top:469px;width:73px;height:21px;line-height:19px;">OK</div>
 <div class="btn" style="left:208px;top:469px;width:73px;height:21px;line-height:19px;">Отмена</div>
 <div class="btn" style="left:289px;top:469px;width:73px;height:21px;line-height:19px;color:#838383;background:#d9d9d9;border-color:#c4c4c4;">Применить</div>
</div>
<!-- CONTEXT MENU -->
<div class="a" style="left:567px;top:236px;width:217px;height:206px;background:#eeeeee;border:1px solid #c4c4c4;box-sizing:border-box;box-shadow:2px 2px 3px rgba(0,0,0,0.35);">
 <div class="ctx" style="left:33px;top:7px;">Вид</div>
 <div class="ctx" style="left:33px;top:29px;">Сортировка</div>
 <div class="ctx" style="left:33px;top:51px;">Обновить</div>
 <div class="a" style="left:9px;top:73px;width:197px;height:1px;background:#8c8c8c;"></div>
 <div class="ctx dim" style="left:33px;top:80px;">Вставить</div>
 <div class="ctx dim" style="left:33px;top:102px;">Вставить ярлык</div>
 <div class="a" style="left:9px;top:124px;width:197px;height:1px;background:#8c8c8c;"></div>
 <div class="ctx" style="left:33px;top:131px;">Создать</div>
 <div class="a" style="left:9px;top:153px;width:197px;height:1px;background:#8c8c8c;"></div>
 <div class="ctx" style="left:33px;top:160px;">Параметры экрана</div>
 <div class="ctx" style="left:33px;top:182px;">Персонализация</div>
 <svg class="a" style="left:196px;top:7px" width="10" height="160" viewBox="0 0 10 160">
  <path d="M2,1 L8,7 L2,13" stroke="#333" stroke-width="1.1" fill="none"/>
  <path d="M2,23 L8,29 L2,35" stroke="#333" stroke-width="1.1" fill="none"/>
  <path d="M2,124 L8,130 L2,136" stroke="#333" stroke-width="1.1" fill="none"/>
 </svg>
 <svg class="a" style="left:9px;top:162px" width="18" height="36" viewBox="0 0 18 36">
  <rect x="1" y="1" width="15" height="10" fill="#7fc6f2" stroke="#2a8fd6" stroke-width="1.2"/>
  <rect x="3" y="3" width="11" height="6" fill="#bfe4fa"/>
  <rect x="5" y="12" width="7" height="1" fill="#777"/>
  <rect x="1" y="23" width="15" height="10" fill="#3a5ee0" stroke="#2a8fd6" stroke-width="1.2"/>
  <rect x="2" y="27" width="7" height="5" fill="#8a2be2"/>
  <path d="M6,31 L16,21" stroke="#fff" stroke-width="1.6"/>
  <path d="M13,23 L17,19" stroke="#444" stroke-width="1.6"/>
  <rect x="5" y="34" width="7" height="1" fill="#777"/>
 </svg>
</div>
<!-- SETTINGS WINDOW -->
<div class="win" style="left:1052px;top:33px;width:802px;height:634px;background:#fff;border:1px solid rgba(40,20,10,0.55);box-sizing:border-box;box-shadow:0 0 10px rgba(0,0,0,0.2);">
 <div class="a" style="left:0;top:0;width:320px;height:634px;background:#e6e6e6;"></div>
 <svg class="a" style="left:17px;top:9px" width="16" height="13" viewBox="0 0 16 13"><path d="M6.5,1 L1.5,6 L6.5,11 M1.5,6 L13,6" stroke="#555" stroke-width="1" fill="none"/></svg>
 <div class="t" style="left:62px;top:11px;font-size:12px;color:#000;">Параметры</div>
 <svg class="a" style="left:17px;top:66px" width="16" height="16" viewBox="0 0 16 16"><path d="M1,8 L8,1.5 L15,8 M3,6.5 L3,15 L6.5,15 L6.5,10 L9.5,10 L9.5,15 L13,15 L13,6.5" stroke="#000" stroke-width="1.3" fill="none"/></svg>
 <div class="t" style="left:48px;top:67px;font-size:14px;color:#000;">Главная</div>
 <div class="a" style="left:16px;top:105px;width:289px;height:32px;background:#f3f3f3;border:2px solid #8e8e8e;box-sizing:border-box;"></div>
 <div class="t" style="left:28px;top:113px;font-size:14px;color:#4a4a4a;">Найти параметр</div>
 <svg class="a" style="left:283px;top:114px" width="14" height="14" viewBox="0 0 14 14"><circle cx="8.5" cy="5.5" r="4.3" stroke="#222" stroke-width="1.1" fill="none"/><path d="M5.5,8.5 L1,13" stroke="#222" stroke-width="1.2"/></svg>
 <div class="t" style="left:16px;top:160px;font-size:13.3px;font-weight:bold;color:#000;">Персонализация</div>
 <div class="a" style="left:0;top:214px;width:5px;height:23px;background:#0078d7;"></div>
 <div class="t" style="left:47px;top:219px;font-size:14px;">Фон</div>
 <div class="t" style="left:47px;top:267px;font-size:14px;">Цвета</div>
 <div class="t" style="left:47px;top:315px;font-size:14px;">Экран блокировки</div>
 <div class="t" style="left:47px;top:363px;font-size:14px;">Темы</div>
 <div class="t" style="left:47px;top:411px;font-size:14px;">Шрифты</div>
 <div class="t" style="left:47px;top:459px;font-size:14px;">Пуск</div>
 <div class="t" style="left:47px;top:507px;font-size:14px;">Панель задач</div>
 <svg class="a" style="left:16px;top:216px" width="18" height="320" viewBox="0 0 18 320">
  <g stroke="#111" stroke-width="1.1" fill="none">
   <rect x="1.5" y="3.5" width="14" height="11"/><path d="M1.5,11 L6,7 L12,13 M9,10 L11,8.5 L15.5,12"/>
  </g>
  <g transform="translate(0,48)" stroke="#111" stroke-width="1.1" fill="none">
   <path d="M8.5,2.5 C4,2.5 1.5,5.5 1.5,9 C1.5,12.5 4,15 7,15 C8.5,15 8.5,13.5 8,12.5 C7.5,11 8.5,10 10,10 L12,10 C14.5,10 15.5,8.5 15.5,7 C15.5,4.5 12.5,2.5 8.5,2.5 Z"/>
   <circle cx="5" cy="8" r="1"/><circle cx="7.5" cy="5.2" r="1"/><circle cx="11" cy="5.5" r="1"/>
  </g>
  <g transform="translate(0,96)" stroke="#111" stroke-width="1.1" fill="none">
   <path d="M10,13.5 L1.5,13.5 L1.5,3.5 L15.5,3.5 L15.5,8"/><rect x="11" y="10.5" width="5" height="5"/><path d="M12,10.5 L12,9 C12,7.5 15,7.5 15,9 L15,10.5"/>
  </g>
  <g transform="translate(0,144)" stroke="#111" stroke-width="1.1" fill="none">
   <path d="M12,4.5 L1.5,4.5 L1.5,13 L15.5,13 L15.5,9"/><path d="M6,16 L11,16 M8.5,13 L8.5,16"/><path d="M5,11 L15,1.5 M7,11 L5,11 L5.5,9"/>
  </g>
  <g transform="translate(0,192)" fill="#111">
   <text x="1" y="10" font-size="9" font-family="Liberation Sans">A</text><text x="6" y="15" font-size="11" font-family="Liberation Sans">A</text>
  </g>
  <g transform="translate(0,240)" stroke="#111" stroke-width="1.1" fill="none">
   <rect x="1.5" y="3.5" width="6" height="4"/><rect x="9.5" y="3.5" width="6" height="4"/><rect x="1.5" y="9.5" width="6" height="4"/><rect x="9.5" y="9.5" width="6" height="4"/>
  </g>
  <g transform="translate(0,288)" stroke="#111" stroke-width="1.1" fill="none">
   <rect x="1.5" y="4.5" width="15" height="9"/><path d="M1.5,11 L16.5,11"/>
  </g>
 </svg>
 <!-- content -->
 <svg class="a" style="left:680px;top:11px" width="110" height="12" viewBox="0 0 110 12">
  <path d="M1,6.5 L11,6.5" stroke="#333" stroke-width="1"/>
  <rect x="46.5" y="1.5" width="9" height="9" stroke="#333" stroke-width="1" fill="none"/>
  <path d="M92,1 L102,11 M102,1 L92,11" stroke="#333" stroke-width="1"/>
 </svg>
 <div class="t" style="left:343px;top:61px;font-size:27px;color:#000;">Фон</div>
 <svg class="a" style="left:344px;top:104px" width="328" height="205" viewBox="0 0 328 205">
  <use href="#wall" x="0" y="0" width="328" height="205"/>
  <rect x="0" y="73" width="157" height="120" fill="#0b0b0b" fill-opacity="0.9"/>
  <g fill="#0078d7">
   <rect x="6" y="105" width="10" height="10"/><rect x="6" y="116" width="10" height="10"/><rect x="6" y="127" width="10" height="10"/><rect x="6" y="138" width="10" height="10"/><rect x="6" y="149" width="10" height="10"/><rect x="6" y="160" width="10" height="10"/><rect x="6" y="171" width="10" height="10"/><rect x="6" y="182" width="10" height="10"/>
   <rect x="76" y="107" width="49" height="49"/><rect x="126" y="107" width="24" height="24"/><rect x="126" y="132" width="24" height="24"/>
   <rect x="76" y="157" width="11" height="11"/><rect x="88" y="157" width="11" height="11"/><rect x="76" y="169" width="11" height="11"/><rect x="88" y="169" width="11" height="11"/><rect x="100" y="157" width="50" height="23"/>
   <rect x="76" y="181" width="49" height="12"/><rect x="126" y="181" width="24" height="12"/>
  </g>
  <g fill="#e8e8e8">
   <rect x="6" y="101" width="30" height="2"/><rect x="76" y="101" width="30" height="2"/>
   <rect x="18" y="109" width="17" height="1.5"/><rect x="18" y="120" width="17" height="1.5"/><rect x="18" y="131" width="17" height="1.5"/><rect x="18" y="142" width="17" height="1.5"/><rect x="18" y="153" width="17" height="1.5"/><rect x="18" y="164" width="17" height="1.5"/><rect x="18" y="175" width="10" height="1.5"/><rect x="18" y="186" width="17" height="1.5"/>
  </g>
  <text x="91" y="137" font-size="12" fill="#fff" font-family="Liberation Sans">Aa</text>
  <rect x="0" y="193" width="328" height="12" fill="#050505"/>
 </svg>
 <div class="a" style="left:784px;top:97px;width:16px;height:536px;background:#e8e8e8;"></div>
 <div class="a" style="left:784px;top:112px;width:16px;height:275px;background:#c2c2c2;"></div>
 <svg class="a" style="left:784px;top:97px" width="16" height="536" viewBox="0 0 16 536"><path d="M4,9.5 L8,5.5 L12,9.5" stroke="#444" stroke-width="1.1" fill="none"/><path d="M4,524 L8,528 L12,524" stroke="#444" stroke-width="1.1" fill="none"/></svg>
 <div class="t" style="left:344px;top:361px;font-size:14px;">Фон</div>
 <div class="a" style="left:344px;top:384px;width:281px;height:32px;border:2px solid #999;box-sizing:border-box;background:#fff;"></div>
 <div class="t" style="left:356px;top:393px;font-size:14px;">Фото</div>
 <svg class="a" style="left:601px;top:395px" width="14" height="9" viewBox="0 0 14 9"><path d="M1,1.5 L7,7.5 L13,1.5" stroke="#555" stroke-width="1.1" fill="none"/></svg>
 <div class="t" style="left:344px;top:449px;font-size:13.6px;">Выберите фото</div>
 <!-- thumbnails -->
 <svg class="a" style="left:344px;top:471px" width="76" height="76" viewBox="0 0 76 76"><use href="#wall" x="-38" y="0" width="152" height="76" preserveAspectRatio="none"/></svg>
 <svg class="a" style="left:424px;top:471px" width="76" height="76" viewBox="0 0 76 76">
  <defs><radialGradient id="blbg" cx="0.3" cy="0.5" r="0.9"><stop offset="0" stop-color="#10245a"/><stop offset="1" stop-color="#050d24"/></radialGradient></defs>
  <rect width="76" height="76" fill="url(#blbg)"/>
  <path d="M1,46 C6,30 28,18 46,11 C58,7 66,12 67,24 C68,34 62,40 74,46 L76,50 L76,70 C62,77 30,77 1,74 Z" fill="#1a3ce6"/>
  <path d="M2,52 C12,38 30,28 48,28 C40,34 32,44 24,58 C16,70 8,74 2,72 Z" fill="#3a6cff"/>
  <path d="M20,30 C30,20 46,12 58,14 C50,18 40,24 34,32 C28,36 22,36 20,30 Z" fill="#4f86ff"/>
  <path d="M30,76 C34,60 44,46 58,40 C66,38 72,42 76,48 L76,76 Z" fill="#1530c8"/>
  <path d="M8,64 C18,50 34,40 50,36" stroke="#0d1f9a" stroke-width="1.6" fill="none"/>
  <path d="M14,44 C26,32 42,22 60,20" stroke="#0d1f9a" stroke-width="1.4" fill="none"/>
  <path d="M40,76 C44,62 54,52 68,50" stroke="#5b92ff" stroke-width="1.4" fill="none"/>
  <path d="M0,76 L0,60 C6,66 14,70 22,76 Z" fill="#2750f5"/>
 </svg>
 <svg class="a" style="left:504px;top:471px" width="76" height="76" viewBox="0 0 76 76">
  <defs><linearGradient id="w10" x1="0" y1="0" x2="1" y2="0.3"><stop offset="0" stop-color="#16a6f2"/><stop offset="0.55" stop-color="#0c8ae8"/><stop offset="1" stop-color="#0a6bd6"/></linearGradient></defs>
  <rect width="76" height="76" fill="url(#w10)"/>
  <polygon points="0,4 76,30 76,50 0,48" fill="#5cc8ff" fill-opacity="0.22"/>
  <polygon points="0,50 76,50 76,60 0,76" fill="#0a5fc8" fill-opacity="0.25"/>
  <g fill="#8ad6ff" fill-opacity="0.75"><polygon points="54,31 62,30 62,39 54,39"/><polygon points="63,29 76,27 76,39 63,39"/><polygon points="54,40 62,40 62,49 54,48"/><polygon points="63,40 76,40 76,51 63,50"/></g>
 </svg>
 <svg class="a" style="left:584px;top:471px" width="76" height="76" viewBox="0 0 76 76">
  <defs><linearGradient id="bch" x1="0" y1="0" x2="0" y2="1"><stop offset="0" stop-color="#2c7cd2"/><stop offset="0.35" stop-color="#5fa2dc"/><stop offset="0.62" stop-color="#b9d2e4"/><stop offset="0.66" stop-color="#6f9cc0"/><stop offset="1" stop-color="#5f9ad2"/></linearGradient></defs>
  <rect width="76" height="76" fill="url(#bch)"/>
  <path d="M22,2 C35,0 55,2 76,4 L76,26 C62,22 50,20 40,14 C32,10 24,8 22,2 Z" fill="#f0f2f2" fill-opacity="0.8"/>
  <path d="M0,18 C10,20 22,24 40,30 C30,31 14,28 0,26 Z" fill="#eef2f4" fill-opacity="0.7"/>
  <path d="M32,48 C33,40 34,36 38,35 C42,36 44,40 46,48 Z" fill="#b88a48"/>
  <path d="M50,48 C52,38 54,30 62,27 C68,28 72,34 76,40 L76,48 Z" fill="#c8964a"/>
  <path d="M56,48 C58,44 60,42 62,46 L62,48 Z" fill="#7a9ab8"/>
  <rect x="0" y="47" width="76" height="3" fill="#d6e2ea"/>
  <path d="M32,50 L46,50 C44,58 42,62 38,63 C34,62 33,56 32,50 Z" fill="#8a6a42" fill-opacity="0.75"/>
  <path d="M50,50 L76,50 L76,58 C72,66 66,70 62,70 C56,66 52,58 50,50 Z" fill="#9a7444" fill-opacity="0.75"/>
  <path d="M0,62 C20,58 40,66 76,62 L76,76 L0,76 Z" fill="#d8e6f0" fill-opacity="0.35"/>
  <path d="M12,40 L14,40 L15,47 L11,47 Z M11,51 L15,51 L14,58 L12,58 Z" fill="#1a2228"/>
 </svg>
 <svg class="a" style="left:664px;top:471px" width="76" height="76" viewBox="0 0 76 76">
  <defs><radialGradient id="hz" cx="0.62" cy="0.62" r="0.4"><stop offset="0" stop-color="#e07030"/><stop offset="0.35" stop-color="#7a4428"/><stop offset="1" stop-color="#1a1b22" stop-opacity="0"/></radialGradient>
  <linearGradient id="mw" x1="0" y1="0" x2="1" y2="1"><stop offset="0" stop-color="#9a9cae" stop-opacity="0.6"/><stop offset="1" stop-color="#6a6c7a" stop-opacity="0.2"/></linearGradient></defs>
  <rect width="76" height="76" fill="#1b1d24"/>
  <rect width="76" height="76" fill="url(#hz)"/>
  <path d="M38,0 L54,0 C58,14 66,28 76,34 L76,44 C62,36 48,18 38,0 Z" fill="url(#mw)"/>
  <path d="M0,52 C20,50 50,50 76,52 L76,76 L0,76 Z" fill="#0d0e11"/>
  <path d="M20,44 L22,44 L22,52 L20,52 Z M25,43 L27,43 L27,52 L25,52 Z" fill="#111"/>
  <path d="M52,70 C56,60 64,56 76,58 L76,72 Z" fill="#72e24a"/>
  <path d="M56,70 C60,64 66,61 72,62" stroke="#3aa028" stroke-width="1" fill="none"/>
 </svg>
 <div class="a" style="left:344px;top:556px;width:90px;height:30px;background:#cccccc;"></div>
 <div class="t" style="left:344px;top:564px;width:90px;text-align:center;font-size:14px;">Обзор</div>
 <div class="t" style="left:344px;top:618px;font-size:14px;">Выберите положение</div>
</div>
<!-- PAINT WINDOW -->
<div class="win" style="left:458px;top:763px;width:954px;height:342px;background:#f0f0f0;border:1px solid #9a9a9a;border-top-color:#8a8f92;box-sizing:border-box;box-shadow:0 0 10px rgba(0,0,0,0.25);">
 <div class="a" style="left:0;top:0;width:954px;height:30px;background:#777;"></div>
</div>
<svg class="a" style="left:466px;top:769px" width="112" height="20" viewBox="0 0 112 20">
 <ellipse cx="9" cy="11" rx="8" ry="6" fill="#e8eef5" stroke="#9aa7b5" stroke-width="0.7"/>
 <circle cx="5" cy="10" r="1.6" fill="#e74c3c"/><circle cx="8" cy="7.5" r="1.6" fill="#f1c40f"/><circle cx="12" cy="8" r="1.6" fill="#2ecc71"/><circle cx="6" cy="13.5" r="1.6" fill="#3498db"/>
 <path d="M13,16 L17,3" stroke="#e67e22" stroke-width="2"/>
 <rect x="23" y="5" width="1.5" height="11" fill="#c8c8c8"/>
 <rect x="34" y="3" width="15" height="15" fill="#8e44c8"/><rect x="37" y="3" width="9" height="6" fill="#e8e8f8"/><rect x="37" y="12" width="9" height="6" fill="#c9b3e6"/>
 <path d="M60,7 C64,3 70,4 70,10 C70,14 66,16 63,16" stroke="#b5c4d4" stroke-width="2.6" fill="none"/><polygon points="56,4 62,3 61,10" fill="#b5c4d4"/>
 <path d="M90,7 C86,3 80,4 80,10 C80,14 84,16 87,16" stroke="#b5c4d4" stroke-width="2.6" fill="none"/><polygon points="94,4 88,3 89,10" fill="#b5c4d4"/>
 <rect x="101" y="8" width="7" height="1.2" fill="#222"/><polygon points="101,11 108,11 104.5,14" fill="#222"/>
 <rect x="115" y="5" width="1.5" height="11" fill="#c8c8c8"/>
</svg>
<svg class="a" style="left:580px;top:772px" width="4" height="14"><rect x="1" y="0" width="1.5" height="13" fill="#c8c8c8"/></svg>
<div class="t" style="left:590px;top:772px;font-size:12px;color:#b8b8b8;">Безымянный - Paint</div>
<svg class="a" style="left:1290px;top:771px" width="106" height="14" viewBox="0 0 106 14">
 <path d="M2,7.5 L12,7.5" stroke="#dedede" stroke-width="1"/>
 <rect x="47.5" y="2.5" width="10" height="10" stroke="#dedede" stroke-width="1" fill="none"/>
 <path d="M93,2 L103,12 M103,2 L93,12" stroke="#dedede" stroke-width="1.1"/>
</svg>
<!-- tab row -->
<div class="a" style="left:459px;top:793px;width:952px;height:24px;background:#fff;"></div>
<div class="a" style="left:459px;top:793px;width:56px;height:24px;background:#1979ca;"></div>
<div class="t" style="left:459px;top:800px;width:56px;text-align:center;font-size:11.5px;color:#fff;">Файл</div>
<div class="a" style="left:515px;top:794px;width:69px;height:24px;background:#f5f6f7;border:1px solid #dadbdc;border-bottom:none;box-sizing:border-box;"></div>
<div class="t" style="left:515px;top:800px;width:69px;text-align:center;font-size:11px;color:#333;">Главная</div>
<div class="t" style="left:599px;top:800px;font-size:11.5px;color:#333;">Вид</div>
<svg class="a" style="left:1372px;top:799px" width="38" height="16" viewBox="0 0 38 16">
 <path d="M2,8 L6,4 L10,8" stroke="#555" stroke-width="1.1" fill="none"/>
 <circle cx="28" cy="8" r="7.8" fill="#1565c0"/><circle cx="28" cy="8" r="6.5" fill="#2174d2"/>
 <text x="24.2" y="12.5" font-size="12" font-weight="bold" fill="#fff" font-family="Liberation Sans">?</text>
</svg>
<!-- ribbon -->
<div class="a" style="left:459px;top:817px;width:952px;height:92px;background:#f5f6f7;border-top:1px solid #dadbdc;box-sizing:border-box;"></div>
<div class="a" style="left:459px;top:909px;width:952px;height:6px;background:#d4dbe5;"></div>
<div class="a" style="left:464px;top:820px;width:53px;height:86px;border:1px solid #dfe3e8;box-sizing:border-box;background:#f3f5f8;"></div>
<div class="a" style="left:475px;top:825px;width:30px;height:30px;border:1px solid #d1d6dd;box-sizing:border-box;background:#fcfcfc;"></div>
<svg class="a" style="left:482px;top:829px" width="16" height="20" viewBox="0 0 16 20"><rect x="1" y="3" width="13" height="15" fill="#c89a56"/><rect x="3" y="5" width="9" height="11" fill="#fff"/><rect x="5" y="1" width="5" height="4" fill="#8a6a3a"/><path d="M4,8 L11,8 M4,10.5 L11,10.5 M4,13 L11,13" stroke="#c89a56" stroke-width="0.8"/></svg>
<div class="rl" style="left:459px;top:861px;width:62px;">Буфер<br>обмена <svg width="7" height="4" viewBox="0 0 7 4" style="vertical-align:middle"><path d="M0,0 L7,0 L3.5,4Z" fill="#222"/></svg></div>
<div class="gsep" style="left:612px;"></div><div class="gsep" style="left:694px;"></div><div class="gsep" style="left:747px;"></div><div class="gsep" style="left:832px;"></div><div class="gsep" style="left:896px;"></div><div class="gsep" style="left:1276px;"></div><div class="gsep" style="left:1391px;"></div>
<svg class="a" style="left:532px;top:828px" width="32" height="26" viewBox="0 0 32 26"><rect x="1.5" y="1.5" width="29" height="23" fill="none" stroke="#2d5a9e" stroke-width="1.3" stroke-dasharray="2 1.6"/></svg>
<div class="rl" style="left:518px;top:861px;width:60px;">Выделить<br><svg width="7" height="4" viewBox="0 0 7 4" style="vertical-align:middle"><path d="M0,0 L7,0 L3.5,4Z" fill="#222"/></svg></div>
<svg class="a" style="left:579px;top:824px" width="26" height="62" viewBox="0 0 26 62">
 <path d="M5,1 L5,12 L15,12 M2,4 L12,4 L12,15 M5,12 L13,3" stroke="#3a79c4" stroke-width="1.1" fill="none"/>
 <rect x="7" y="25" width="8" height="6" fill="#fff" stroke="#2c6fbf" stroke-width="1.2"/><rect x="3" y="30" width="7" height="5" fill="#fff" stroke="#2c6fbf" stroke-width="1.2"/>
 <polygon points="8,58 14,48 14,58" fill="#1f7ad2"/><polygon points="2,58 8,58 8,52" fill="#c9ced4"/><path d="M4,51 C5,47 8,46 11,47" stroke="#1f7ad2" stroke-width="1.5" fill="none"/>
 <polygon points="18,52 24,52 21,55" fill="#222"/>
</svg>
<div class="gl" style="left:526px;top:894px;">Изображение</div>
<svg class="a" style="left:619px;top:832px" width="68" height="48" viewBox="0 0 68 48">
 <path d="M3,16 L14,4" stroke="#e8b830" stroke-width="4"/><path d="M12.5,2.5 L15.5,5.5" stroke="#e05050" stroke-width="3"/><path d="M2,17 L4,15" stroke="#333" stroke-width="2"/>
 <polygon points="30,8 37,3 42,9 35,15" fill="#e8eef5" stroke="#4a7ab8" stroke-width="1"/><path d="M26,9 C26,6 28,5 30,6" stroke="#e74c3c" stroke-width="2.5" fill="none"/>
 <text x="49" y="16" font-size="17" font-weight="bold" font-family="Liberation Serif" fill="#1f3f6e">A</text>
 <polygon points="3,40 12,31 18,37 9,45" fill="#ef8a8a"/><polygon points="3,40 9,45 11,43 5,38" fill="#d66"/>
 <path d="M28,44 L37,34" stroke="#aab4be" stroke-width="2.5"/><path d="M36,35 L41,30" stroke="#1f5fbf" stroke-width="4"/>
 <circle cx="56" cy="36" r="4.5" fill="#eef4fa" stroke="#4a6d90" stroke-width="1.6"/><path d="M59,39 L64,45" stroke="#b07a3a" stroke-width="2.6"/>
</svg>
<div class="gl" style="left:617px;top:894px;">Инструменты</div>
<div class="a" style="left:699px;top:822px;width:43px;height:64px;background:#cce4f7;border:1px solid #98c4ec;box-sizing:border-box;"></div>
<div class="a" style="left:704px;top:825px;width:32px;height:32px;background:#fff;border:1px solid #9fb0c2;box-sizing:border-box;"></div>
<svg class="a" style="left:705px;top:826px" width="30" height="30" viewBox="0 0 30 30">
 <path d="M6,8 C2,14 4,24 12,26 C18,27 20,22 16,20" stroke="#f07020" stroke-width="4" fill="none"/>
 <path d="M14,22 L27,4" stroke="#cdd5de" stroke-width="3"/><ellipse cx="15" cy="21" rx="4" ry="6" transform="rotate(40 15 21)" fill="#a67c52"/>
</svg>
<div class="rl" style="left:699px;top:861px;width:42px;">Кисти<br><svg width="7" height="4" viewBox="0 0 7 4" style="vertical-align:middle"><path d="M0,0 L7,0 L3.5,4Z" fill="#222"/></svg></div>
<svg class="a" style="left:757px;top:824px" width="68" height="40" viewBox="0 0 68 40">
 <circle cx="21" cy="13" r="10" fill="#3fae4a"/><rect x="3" y="7" width="16" height="16" fill="#f08a4a" stroke="#d06a2a" stroke-width="0.8"/>
 <rect x="8" y="13" width="14" height="16" rx="2" fill="#cfe6fa" stroke="#2e78c0" stroke-width="1.2"/><ellipse cx="15" cy="13.5" rx="7" ry="2.5" fill="#e8f4fd" stroke="#2e78c0" stroke-width="1.2"/>
 <rect x="43" y="5" width="14" height="12" fill="none" stroke="#aab6c2" stroke-width="1"/><path d="M47,15 L56,5" stroke="#aab6c2" stroke-width="2"/><polygon points="60,8 65,8 62.5,11" fill="#bbb"/>
 <polygon points="44,30 51,24 57,30 50,36" fill="#cdd5de"/><rect x="42" y="36" width="16" height="3" fill="#c0c8d0"/><polygon points="60,30 65,30 62.5,33" fill="#bbb"/>
</svg>
<div class="rl" style="left:747px;top:861px;width:52px;">Фигуры<br><svg width="7" height="4" viewBox="0 0 7 4" style="vertical-align:middle"><path d="M0,0 L7,0 L3.5,4Z" fill="#222"/></svg></div>
<div class="gl" style="left:769px;top:894px;">Фигуры</div>
<div class="a" style="left:847px;top:826px;width:32px;height:1px;background:#1f3763;"></div>
<div class="a" style="left:847px;top:831px;width:32px;height:2px;background:#1f3763;"></div>
<div class="a" style="left:847px;top:838px;width:32px;height:4px;background:#1f3763;"></div>
<div class="a" style="left:847px;top:846px;width:32px;height:7px;background:#1f3763;"></div>
<div class="rl" style="left:832px;top:861px;width:62px;">Толщина<br><svg width="7" height="4" viewBox="0 0 7 4" style="vertical-align:middle"><path d="M0,0 L7,0 L3.5,4Z" fill="#222"/></svg></div>
<div class="a" style="left:901px;top:822px;width:42px;height:66px;background:#cce4f7;border:1px solid #98c4ec;box-sizing:border-box;"></div>
<div class="a" style="left:906px;top:825px;width:32px;height:32px;background:#000;border:2px solid #fff;outline:1px solid #8c8c8c;box-sizing:border-box;"></div>
<div class="rl" style="left:901px;top:861px;width:42px;">Цвет<br>1</div>
<div class="a" style="left:952px;top:829px;width:24px;height:24px;background:#fff;border:1px solid #8c8c8c;box-sizing:border-box;"></div>
<div class="rl" style="left:944px;top:861px;width:40px;">Цвет<br>2</div>
<div class="pal" style="left:986px;top:823px;"><i style="background:#000000"></i></div>
<div class="pal" style="left:1008px;top:823px;"><i style="background:#7f7f7f"></i></div>
<div class="pal" style="left:1030px;top:823px;"><i style="background:#880015"></i></div>
<div class="pal" style="left:1052px;top:823px;"><i style="background:#ed1c24"></i></div>
<div class="pal" style="left:1074px;top:823px;"><i style="background:#ff7f27"></i></div>
<div class="pal" style="left:1096px;top:823px;"><i style="background:#fff200"></i></div>
<div class="pal" style="left:1118px;top:823px;"><i style="background:#22b14c"></i></div>
<div class="pal" style="left:1140px;top:823px;"><i style="background:#00a2e8"></i></div>
<div class="pal" style="left:1162px;top:823px;"><i style="background:#3f48cc"></i></div>
<div class="pal" style="left:1184px;top:823px;"><i style="background:#a349a4"></i></div>
<div class="pal" style="left:986px;top:845px;"><i style="background:#ffffff"></i></div>
<div class="pal" style="left:1008px;top:845px;"><i style="background:#c3c3c3"></i></div>
<div class="pal" style="left:1030px;top:845px;"><i style="background:#b97a57"></i></div>
<div class="pal" style="left:1052px;top:845px;"><i style="background:#ffaec9"></i></div>
<div class="pal" style="left:1074px;top:845px;"><i style="background:#ffc90e"></i></div>
<div class="pal" style="left:1096px;top:845px;"><i style="background:#efe4b0"></i></div>
<div class="pal" style="left:1118px;top:845px;"><i style="background:#b5e61d"></i></div>
<div class="pal" style="left:1140px;top:845px;"><i style="background:#99d9ea"></i></div>
<div class="pal" style="left:1162px;top:845px;"><i style="background:#7092be"></i></div>
<div class="pal" style="left:1184px;top:845px;"><i style="background:#c8bfe7"></i></div>
<div class="pal" style="left:986px;top:867px;"></div>
<div class="pal" style="left:1008px;top:867px;"></div>
<div class="pal" style="left:1030px;top:867px;"></div>
<div class="pal" style="left:1052px;top:867px;"></div>
<div class="pal" style="left:1074px;top:867px;"></div>
<div class="pal" style="left:1096px;top:867px;"></div>
<div class="pal" style="left:1118px;top:867px;"></div>
<div class="pal" style="left:1140px;top:867px;"></div>
<div class="pal" style="left:1162px;top:867px;"></div>
<div class="pal" style="left:1184px;top:867px;"></div>
<div class="gl" style="left:1071px;top:894px;">Цвета</div>
<svg class="a" style="left:1221px;top:825px" width="31" height="31" viewBox="0 0 31 31">
 <defs><linearGradient id="rb" x1="0" x2="1"><stop offset="0" stop-color="#ff2020"/><stop offset="0.2" stop-color="#ffd000"/><stop offset="0.4" stop-color="#20e020"/><stop offset="0.6" stop-color="#20d0e0"/><stop offset="0.8" stop-color="#3040ff"/><stop offset="1" stop-color="#ff30e0"/></linearGradient>
 <linearGradient id="rbg" x1="0" y1="0" x2="0" y2="1"><stop offset="0" stop-color="#808080" stop-opacity="0"/><stop offset="1" stop-color="#808080" stop-opacity="0.9"/></linearGradient></defs>
 <rect x="0.5" y="0.5" width="30" height="30" fill="#fff" stroke="#b0b0b0"/>
 <rect x="3" y="3" width="25" height="25" fill="url(#rb)"/><rect x="3" y="3" width="25" height="25" fill="url(#rbg)"/>
</svg>
<div class="rl" style="left:1202px;top:861px;width:70px;">Изменение<br>цветов</div>
<div class="a" style="left:1318px;top:826px;width:30px;height:30px;background:#fff;border:1px solid #c8ccd0;box-sizing:border-box;"></div>
<svg class="a" style="left:1323px;top:829px" width="20" height="25" viewBox="0 0 20 25">
 <defs><linearGradient id="p3" x1="0" y1="0" x2="1" y2="1"><stop offset="0" stop-color="#37b6f0"/><stop offset="0.5" stop-color="#9b4ee0"/><stop offset="1" stop-color="#f0503a"/></linearGradient></defs>
 <path d="M10,1 C16,1 19,5 19,9 C19,14 13,18 10,24 C7,18 1,14 1,9 C1,5 4,1 10,1 Z" fill="url(#p3)"/>
 <path d="M10,17 L12,24 L8,24 Z" fill="#f5a020"/>
</svg>
<div class="rl" style="left:1276px;top:861px;width:115px;">Изменить с<br>помощью Paint 3D</div>
<!-- canvas -->
<div class="a" style="left:459px;top:915px;width:936px;height:147px;background:#d4dbe5;"></div>
<div class="a" style="left:464px;top:915px;width:931px;height:147px;background:#fff;"></div>
<div class="a" style="left:1395px;top:915px;width:16px;height:147px;background:#f0f0f0;"></div>
<div class="a" style="left:1397px;top:927px;width:12px;height:24px;background:#cdcdcd;"></div>
<svg class="a" style="left:1395px;top:915px" width="16" height="147" viewBox="0 0 16 147"><path d="M4.5,8.5 L8,5 L11.5,8.5" stroke="#333" stroke-width="1.6" fill="none"/><path d="M4.5,136 L8,139.5 L11.5,136" stroke="#333" stroke-width="1.6" fill="none"/></svg>
<div class="a" style="left:459px;top:1062px;width:952px;height:16px;background:#f0f0f0;"></div>
<div class="a" style="left:476px;top:1063px;width:724px;height:14px;background:#cdcdcd;"></div>
<svg class="a" style="left:459px;top:1062px" width="952" height="16" viewBox="0 0 952 16"><path d="M10.5,4.5 L7,8 L10.5,11.5" stroke="#333" stroke-width="1.6" fill="none"/><path d="M924,4.5 L927.5,8 L924,11.5" stroke="#333" stroke-width="1.6" fill="none"/></svg>
<!-- status bar -->
<div class="a" style="left:459px;top:1078px;width:952px;height:26px;background:#f0f0f0;border-top:1px solid #dcdcdc;box-sizing:border-box;"></div>
<div class="a" style="left:614px;top:1080px;width:1px;height:24px;background:#d9d9d9;"></div>
<div class="a" style="left:770px;top:1080px;width:1px;height:24px;background:#d9d9d9;"></div>
<div class="a" style="left:926px;top:1080px;width:1px;height:24px;background:#d9d9d9;"></div>
<div class="a" style="left:1082px;top:1080px;width:1px;height:24px;background:#d9d9d9;"></div>
<div class="a" style="left:1193px;top:1080px;width:1px;height:24px;background:#d9d9d9;"></div>
<svg class="a" style="left:461px;top:1084px" width="14" height="14" viewBox="0 0 14 14"><path d="M7,1 L7,13 M1,7 L13,7 M5,3 L7,1 L9,3 M5,11 L7,13 L9,11 M3,5 L1,7 L3,9 M11,5 L13,7 L11,9" stroke="#222" stroke-width="1.1" fill="none"/></svg>
<svg class="a" style="left:619px;top:1084px" width="16" height="14" viewBox="0 0 16 14"><path d="M2,1 L2,9 M0.5,2.5 L2,1 L3.5,2.5" stroke="#222" stroke-width="1" fill="none"/><rect x="5.5" y="1.5" width="9" height="8" fill="none" stroke="#222" stroke-dasharray="1.5 1"/><path d="M5,12 L14,12 M12.5,10.5 L14,12 L12.5,13.5" stroke="#222" stroke-width="1" fill="none"/></svg>
<svg class="a" style="left:776px;top:1084px" width="14" height="14" viewBox="0 0 14 14"><path d="M2,1 L2,9" stroke="#222" stroke-width="1.2"/><rect x="4.5" y="1.5" width="9" height="8" fill="none" stroke="#222" stroke-width="1.2"/><path d="M4,12 L13,12" stroke="#222" stroke-width="1.2"/></svg>
<div class="t" style="left:795px;top:1085px;font-size:11.6px;color:#222;">1152 × 720пкс</div>
<div class="t" style="left:1215px;top:1085px;font-size:11.6px;color:#222;">100%</div>
<svg class="a" style="left:1249px;top:1082px" width="142" height="19" viewBox="0 0 142 19">
 <circle cx="9" cy="9.5" r="7.5" fill="#f4f4f4" stroke="#555" stroke-width="1"/><path d="M5,9.5 L13,9.5" stroke="#222" stroke-width="1.8"/>
 <rect x="27" y="8" width="85" height="3" fill="#e2e2e2" stroke="#d0d0d0" stroke-width="0.6"/>
 <path d="M65,1 L75,1 L75,13 L70,18 L65,13 Z" fill="#0a6ad8"/>
 <circle cx="131" cy="9.5" r="7.5" fill="#f4f4f4" stroke="#555" stroke-width="1"/><path d="M127,9.5 L135,9.5 M131,5.5 L131,13.5" stroke="#222" stroke-width="1.8"/>
</svg>
<!-- TASKBAR -->
<div class="a" style="left:0;top:1160px;width:1920px;height:41px;background:#202427;"></div>
<svg class="a" style="left:0;top:1160px" width="300" height="41" viewBox="0 0 300 41">
 <g fill="#fff"><polygon points="15.5,13.5 23,12.4 23,19.6 15.5,19.6"/><polygon points="24,12.2 32.5,11 32.5,19.6 24,19.6"/><polygon points="15.5,20.6 23,20.6 23,27.8 15.5,26.7"/><polygon points="24,20.6 32.5,20.6 32.5,29 24,27.9"/></g>
 <circle cx="74" cy="17.5" r="7.8" fill="none" stroke="#fff" stroke-width="2"/><path d="M68.5,23 L61.5,30" stroke="#fff" stroke-width="2.2" stroke-linecap="round"/>
 <g stroke="#fff" stroke-width="1.6" fill="none"><path d="M112,13 L124,13 M112,27 L124,27"/><rect x="113" y="16.5" width="10" height="7"/><path d="M127,13 L127,15 M127,18 L127,27"/></g>
 <path d="M159,13 L166,13 L168,15 L182,15 L182,29 L159,29 Z" fill="#f5c84a"/><rect x="159" y="17" width="23" height="12" fill="#ffd965"/><path d="M159,14 L166,14 L167.5,16 L159,16 Z" fill="#e3a52a"/>
 <path d="M164,30 L164,23 L177,23 L177,30 L173,30 L173,26 L168,26 L168,30 Z" fill="#2a8ee0"/>
 <g transform="translate(219.5,20) rotate(22.5)"><path d="M7.45,-1.51 L10.11,-1.32 L10.11,1.32 L7.45,1.51 L6.33,4.20 L8.09,6.22 L6.22,8.09 L4.20,6.33 L1.51,7.45 L1.32,10.11 L-1.32,10.11 L-1.51,7.45 L-4.20,6.33 L-6.22,8.09 L-8.09,6.22 L-6.33,4.20 L-7.45,1.51 L-10.11,1.32 L-10.11,-1.32 L-7.45,-1.51 L-6.33,-4.20 L-8.09,-6.22 L-6.22,-8.09 L-4.20,-6.33 L-1.51,-7.45 L-1.32,-10.11 L1.32,-10.11 L1.51,-7.45 L4.20,-6.33 L6.22,-8.09 L8.09,-6.22 L6.33,-4.20 Z M3.6,0 A3.6,3.6 0 1 0 -3.6,0 A3.6,3.6 0 1 0 3.6,0 Z" fill="#fff" fill-rule="evenodd"/></g>
 <ellipse cx="266" cy="22" rx="10.5" ry="8" fill="#e3ecf5" stroke="#9fb0c0" stroke-width="0.6"/>
 <circle cx="261" cy="20.5" r="1.8" fill="#e74c3c"/><circle cx="264" cy="17" r="1.8" fill="#8bc34a"/><circle cx="268" cy="16.5" r="1.8" fill="#f1c40f"/><circle cx="263" cy="25" r="1.8" fill="#2c6fd0"/>
 <path d="M270,31 L280,8" stroke="#f0a020" stroke-width="2.2"/><path d="M278,12 L281,6" stroke="#e8d8b0" stroke-width="2.6"/>
 <rect x="151" y="38" width="40" height="2" fill="#76b9ed"/><rect x="200" y="38" width="40" height="2" fill="#76b9ed"/><rect x="249" y="38" width="40" height="2" fill="#76b9ed"/>
</svg>
<svg class="a" style="left:1695px;top:1160px" width="225" height="41" viewBox="0 0 225 41">
 <g stroke="#fff" stroke-width="1" fill="none">
  <rect x="7.5" y="12.5" width="5" height="4"/><path d="M6.5,16.5 L13.5,16.5 L13.5,24 M6.5,16.5 L6.5,28.5 L12,28.5"/><path d="M13,26 L15,28 L19,23" stroke-width="0.9"/>
  <rect x="26.5" y="14.5" width="14" height="10"/><path d="M30,28.5 L37,28.5 M33.5,24.5 L33.5,28.5"/><rect x="26.5" y="13.5" width="4" height="4" fill="#202427"/><path d="M28.5,17.5 L28.5,28.5 L30,28.5"/>
  <path d="M50.5,17 L53.5,17 L57.5,13 L57.5,27 L53.5,23 L50.5,23 Z"/><path d="M60,17.5 C61.5,19 61.5,21 60,22.5 M62.5,15.5 C65,18 65,22 62.5,24.5 M65,13.5 C68.5,17 68.5,23 65,26.5"/>
 </g>
 <text x="76" y="24.5" font-size="12" fill="#fff" font-family="Liberation Sans" textLength="23" lengthAdjust="spacingAndGlyphs">ENG</text>
 <text x="125.5" y="15" font-size="11.5" fill="#fff" font-family="Liberation Sans" textLength="26.5" lengthAdjust="spacingAndGlyphs">17:20</text>
 <text x="112" y="32.5" font-size="11.5" fill="#fff" font-family="Liberation Sans" textLength="53.5" lengthAdjust="spacingAndGlyphs">07.03.2026</text>
 <path d="M184.5,12.5 L200.5,12.5 L200.5,24.5 L195,24.5 L192.5,27.5 L190,24.5 L184.5,24.5 Z" stroke="#fff" stroke-width="1" fill="none"/>
 <rect x="220" y="0" width="1" height="41" fill="#5a5e62"/>
</svg>
<!-- cursor -->
<svg class="a" style="left:613px;top:-1px" width="16" height="22" viewBox="0 0 16 22">
 <path d="M1.5,1 L1.5,17.5 L5.3,13.8 L8.2,20.2 L10.6,19.1 L7.8,12.9 L13.2,12.9 Z" fill="#fff" stroke="#000" stroke-width="1.1" stroke-linejoin="round"/>
</svg>
<svg class="a" style="left:1400px;top:1093px" width="10" height="10" viewBox="0 0 10 10"><g fill="#b8b8b8"><rect x="8" y="0" width="2" height="2"/><rect x="4" y="4" width="2" height="2"/><rect x="8" y="4" width="2" height="2"/><rect x="0" y="8" width="2" height="2"/><rect x="4" y="8" width="2" height="2"/><rect x="8" y="8" width="2" height="2"/></g></svg>

</body></html>
